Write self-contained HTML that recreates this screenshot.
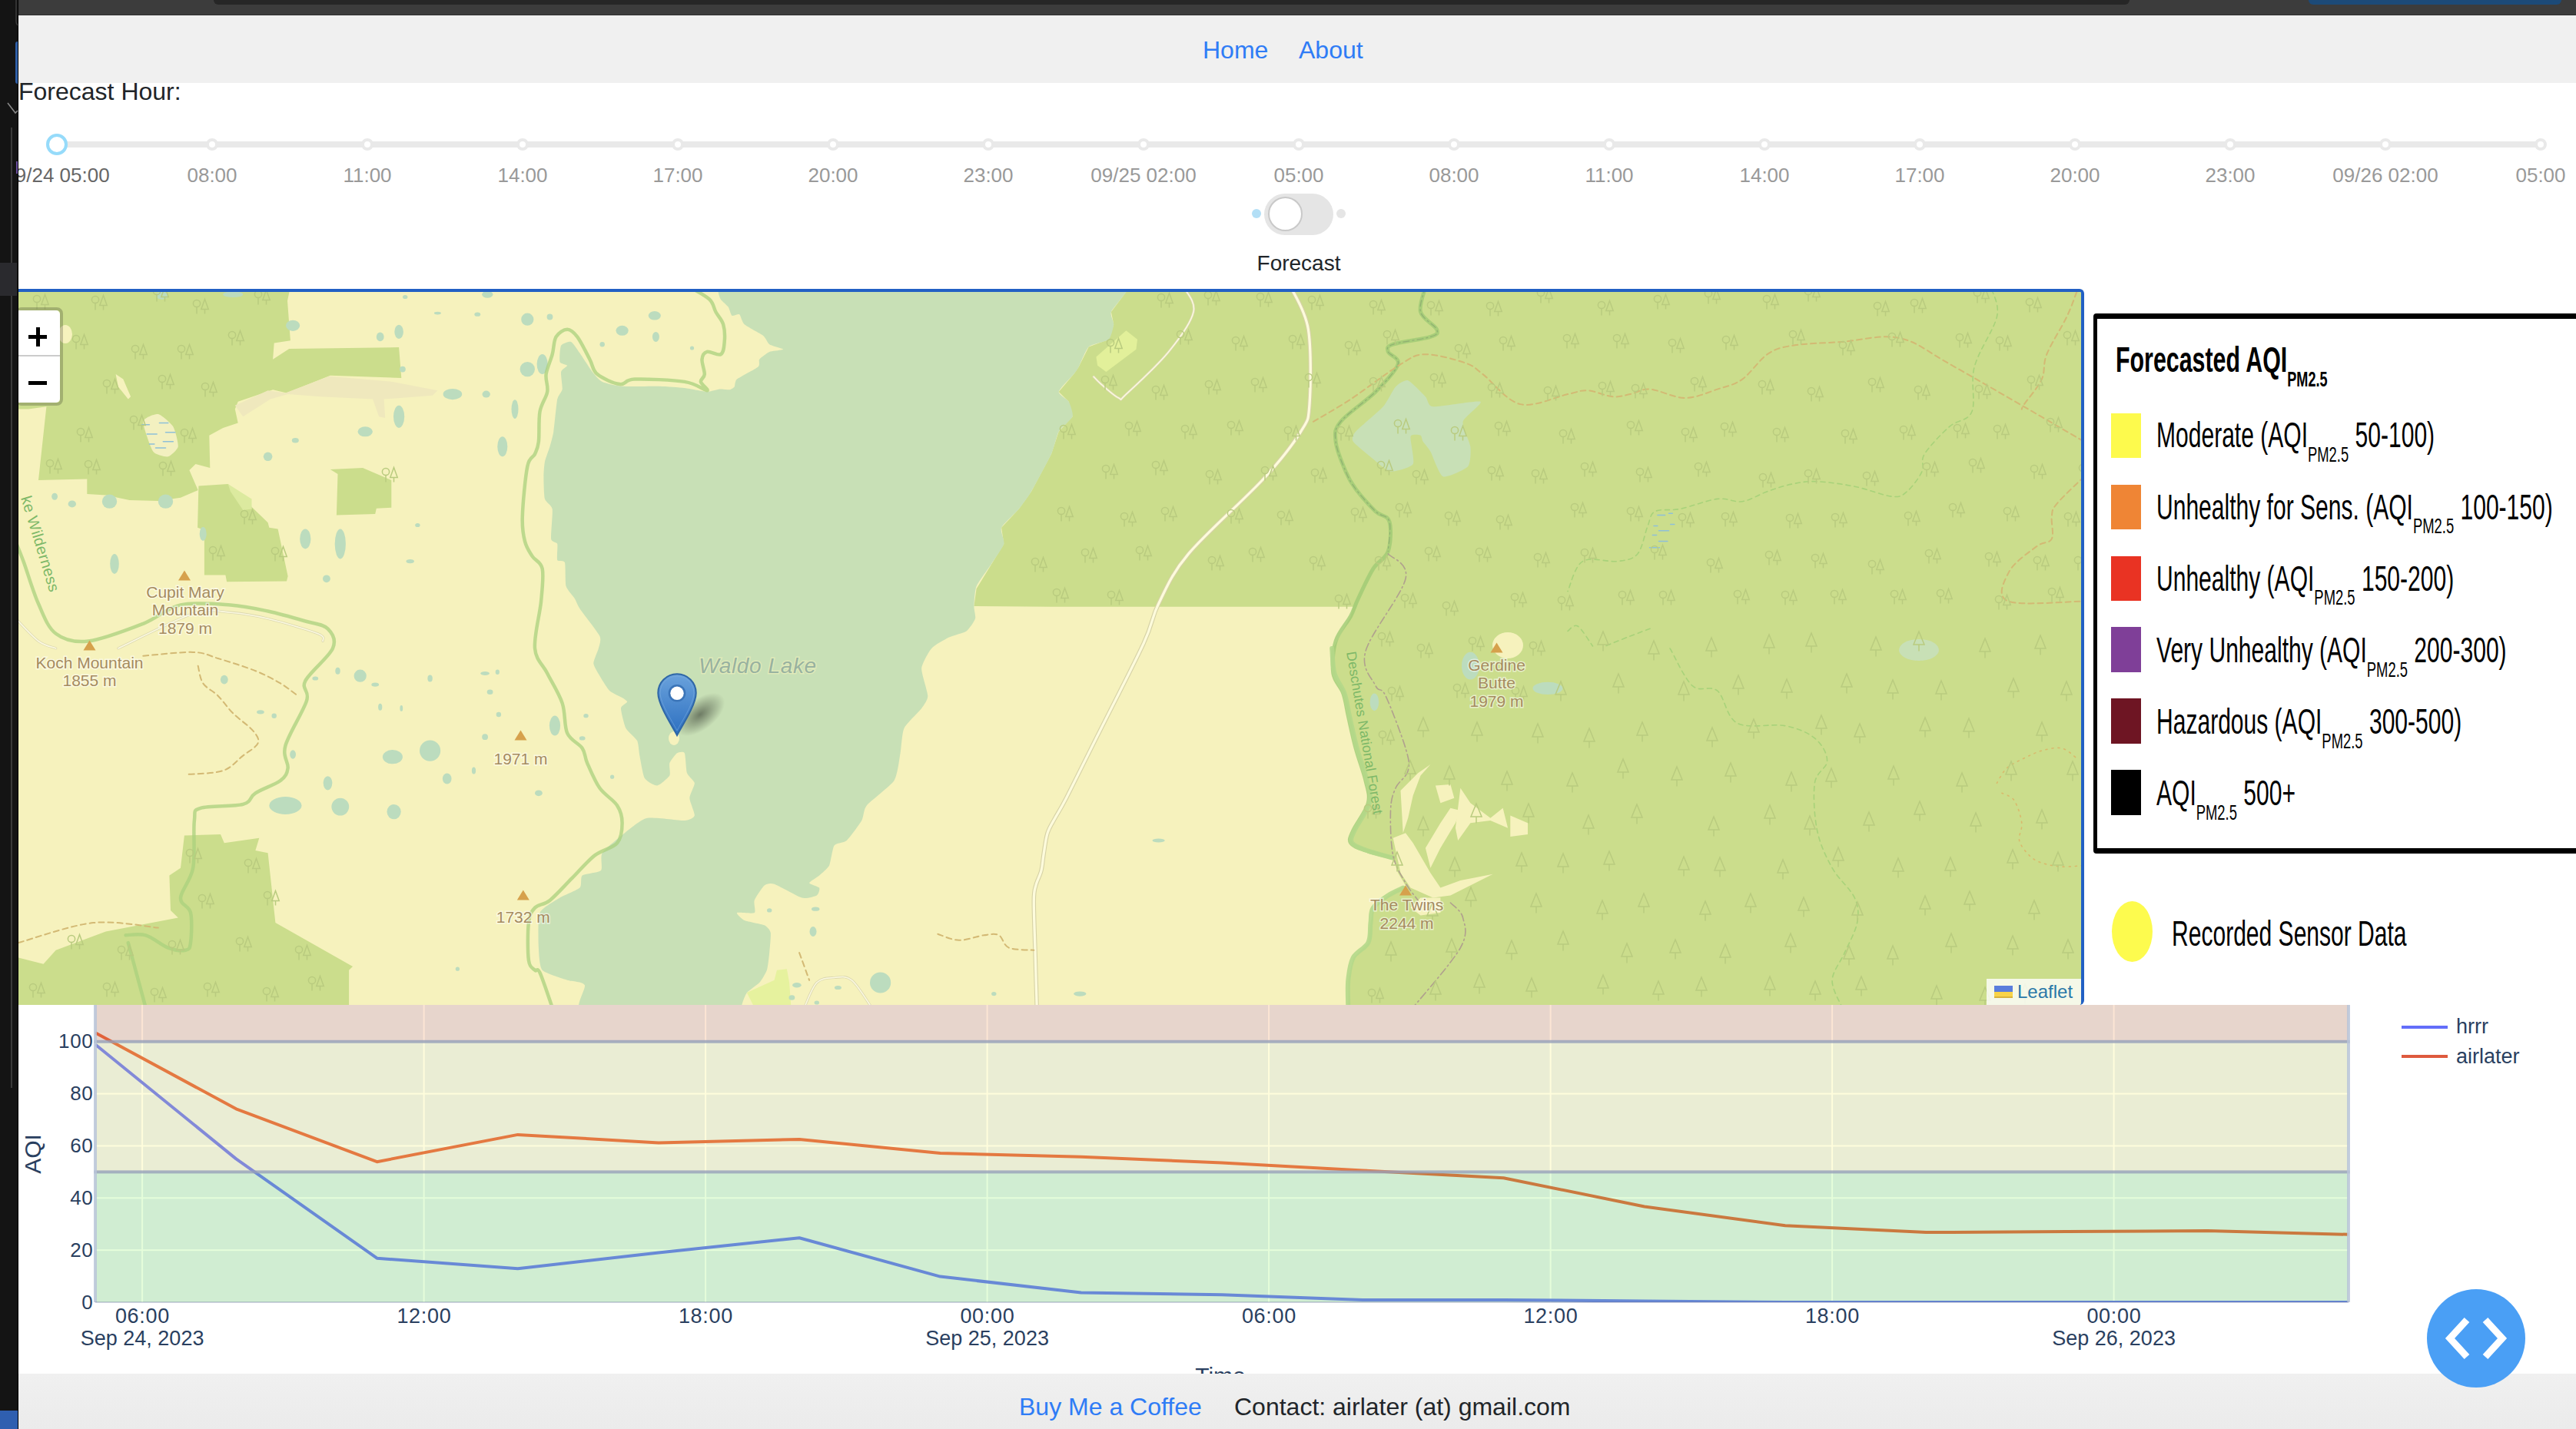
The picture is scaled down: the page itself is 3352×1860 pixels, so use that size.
<!DOCTYPE html>
<html><head><meta charset="utf-8">
<style>
*{margin:0;padding:0;box-sizing:border-box}
html,body{width:3352px;height:1860px;overflow:hidden;background:#fff;font-family:"Liberation Sans",sans-serif;color:#212529}
.a{position:absolute}
.t{position:absolute;white-space:nowrap;line-height:1}
</style></head><body>

<div class="a" style="left:24px;top:0;width:3328px;height:20px;background:#3c3c3c;border-bottom:1px solid #2e2e2e"></div>
<div class="a" style="left:278px;top:0;width:2493px;height:6px;background:#262626;border-radius:0 0 17px 17px"></div>
<div class="a" style="left:3004px;top:0;width:329px;height:6px;background:#1c4a78;border-radius:0 0 17px 17px"></div>
<div class="a" style="left:24px;top:20px;width:3328px;height:88px;background:#f0f0f0"></div>

<div class="t" style="left:1565px;top:48.9px;font-size:32px;color:#2f7cf6;">Home</div>
<div class="t" style="left:1690px;top:48.9px;font-size:32px;color:#2f7cf6;">About</div>
<div class="t" style="left:24px;top:102.9px;font-size:32px;color:#212529;">Forecast Hour:</div>
<div class="a" style="left:74px;top:184px;width:3232px;height:8px;background:#e9e9e9;border-radius:4px"></div>
<div class="t" style="left:74.0px;top:215.0px;font-size:26px;color:#666;transform:translateX(-50%);">09/24 05:00</div>
<div class="a" style="left:268.0px;top:180px;width:16px;height:16px;border-radius:50%;background:#fff;border:4px solid #e9e9e9"></div>
<div class="t" style="left:276.0px;top:215.0px;font-size:26px;color:#999;transform:translateX(-50%);">08:00</div>
<div class="a" style="left:470.0px;top:180px;width:16px;height:16px;border-radius:50%;background:#fff;border:4px solid #e9e9e9"></div>
<div class="t" style="left:478.0px;top:215.0px;font-size:26px;color:#999;transform:translateX(-50%);">11:00</div>
<div class="a" style="left:672.0px;top:180px;width:16px;height:16px;border-radius:50%;background:#fff;border:4px solid #e9e9e9"></div>
<div class="t" style="left:680.0px;top:215.0px;font-size:26px;color:#999;transform:translateX(-50%);">14:00</div>
<div class="a" style="left:874.0px;top:180px;width:16px;height:16px;border-radius:50%;background:#fff;border:4px solid #e9e9e9"></div>
<div class="t" style="left:882.0px;top:215.0px;font-size:26px;color:#999;transform:translateX(-50%);">17:00</div>
<div class="a" style="left:1076.0px;top:180px;width:16px;height:16px;border-radius:50%;background:#fff;border:4px solid #e9e9e9"></div>
<div class="t" style="left:1084.0px;top:215.0px;font-size:26px;color:#999;transform:translateX(-50%);">20:00</div>
<div class="a" style="left:1278.0px;top:180px;width:16px;height:16px;border-radius:50%;background:#fff;border:4px solid #e9e9e9"></div>
<div class="t" style="left:1286.0px;top:215.0px;font-size:26px;color:#999;transform:translateX(-50%);">23:00</div>
<div class="a" style="left:1480.0px;top:180px;width:16px;height:16px;border-radius:50%;background:#fff;border:4px solid #e9e9e9"></div>
<div class="t" style="left:1488.0px;top:215.0px;font-size:26px;color:#999;transform:translateX(-50%);">09/25 02:00</div>
<div class="a" style="left:1682.0px;top:180px;width:16px;height:16px;border-radius:50%;background:#fff;border:4px solid #e9e9e9"></div>
<div class="t" style="left:1690.0px;top:215.0px;font-size:26px;color:#999;transform:translateX(-50%);">05:00</div>
<div class="a" style="left:1884.0px;top:180px;width:16px;height:16px;border-radius:50%;background:#fff;border:4px solid #e9e9e9"></div>
<div class="t" style="left:1892.0px;top:215.0px;font-size:26px;color:#999;transform:translateX(-50%);">08:00</div>
<div class="a" style="left:2086.0px;top:180px;width:16px;height:16px;border-radius:50%;background:#fff;border:4px solid #e9e9e9"></div>
<div class="t" style="left:2094.0px;top:215.0px;font-size:26px;color:#999;transform:translateX(-50%);">11:00</div>
<div class="a" style="left:2288.0px;top:180px;width:16px;height:16px;border-radius:50%;background:#fff;border:4px solid #e9e9e9"></div>
<div class="t" style="left:2296.0px;top:215.0px;font-size:26px;color:#999;transform:translateX(-50%);">14:00</div>
<div class="a" style="left:2490.0px;top:180px;width:16px;height:16px;border-radius:50%;background:#fff;border:4px solid #e9e9e9"></div>
<div class="t" style="left:2498.0px;top:215.0px;font-size:26px;color:#999;transform:translateX(-50%);">17:00</div>
<div class="a" style="left:2692.0px;top:180px;width:16px;height:16px;border-radius:50%;background:#fff;border:4px solid #e9e9e9"></div>
<div class="t" style="left:2700.0px;top:215.0px;font-size:26px;color:#999;transform:translateX(-50%);">20:00</div>
<div class="a" style="left:2894.0px;top:180px;width:16px;height:16px;border-radius:50%;background:#fff;border:4px solid #e9e9e9"></div>
<div class="t" style="left:2902.0px;top:215.0px;font-size:26px;color:#999;transform:translateX(-50%);">23:00</div>
<div class="a" style="left:3096.0px;top:180px;width:16px;height:16px;border-radius:50%;background:#fff;border:4px solid #e9e9e9"></div>
<div class="t" style="left:3104.0px;top:215.0px;font-size:26px;color:#999;transform:translateX(-50%);">09/26 02:00</div>
<div class="a" style="left:3298.0px;top:180px;width:16px;height:16px;border-radius:50%;background:#fff;border:4px solid #e9e9e9"></div>
<div class="t" style="left:3306.0px;top:215.0px;font-size:26px;color:#999;transform:translateX(-50%);">05:00</div>
<div class="a" style="left:60px;top:174px;width:28px;height:28px;border-radius:50%;background:#fff;border:4px solid #96dbfa"></div>
<div class="a" style="left:1629px;top:272px;width:12px;height:12px;border-radius:50%;background:#b3dff6"></div>
<div class="a" style="left:1739px;top:272px;width:12px;height:12px;border-radius:50%;background:#e5e5e5"></div>
<div class="a" style="left:1645px;top:252px;width:90px;height:54px;border-radius:27px;background:#e5e5e5"></div>
<div class="a" style="left:1650px;top:256px;width:45px;height:45px;border-radius:50%;background:#fff;border:2px solid #c9c9c9"></div>

<div class="t" style="left:1690px;top:329.3px;font-size:28px;color:#212529;transform:translateX(-50%);">Forecast</div>
<div id="map" class="a" style="left:24px;top:376px;width:2688px;height:932px;border-top:4px solid #2260c4;border-right:4px solid #2260c4;border-top-right-radius:6px;border-bottom-right-radius:6px;overflow:hidden;background:#f6f2bf">
<svg width="2684" height="928" viewBox="24 380 2684 928" style="position:absolute;left:0;top:0">
<rect x="0" y="300" width="2800" height="1100" fill="#f6f2bd"/>
<polygon points="11.0,373.5 377.9,373.5 374.0,391.4 377.9,443.3 356.7,446.5 355.1,467.7 376.2,454.0 519.1,452.1 522.3,492.0 429.8,488.8 373.0,511.5 355.1,507.3 309.7,522.8 305.8,532.6 309.7,550.4 290.2,556.9 272.3,566.7 273.3,608.9 254.5,604.0 246.4,612.1 257.7,638.1 235.0,647.8 205.8,652.0 168.5,651.1 137.6,644.6 113.3,643.0 113.3,623.5 50.0,625.1 60.4,529.3 37.0,532.6 11.0,532.6" fill="#cbdd8c" />
<polygon points="305.8,527.7 348.6,508.2 371.4,511.5 428.2,489.7 510.9,496.9 569.4,508.2 562.9,514.7 499.6,519.6 501.2,543.9 493.1,542.3 485.0,519.6 416.8,516.3 374.6,513.1 351.9,519.6 316.2,542.3" fill="#efe8bd" />
<polygon points="258.4,632.6 296.7,630.0 348.6,680.3 350.3,686.8 361.6,688.4 374.6,750.1 373.0,756.6 295.1,757.2 293.4,748.5 265.9,748.5 265.9,690.0 257.1,686.8" fill="#cbdd8c" />
<polygon points="296.7,630.0 327.5,649.4 327.5,662.4 316.2,664.1 299.9,639.7" fill="#dcea9f" />
<polygon points="429.8,611.1 472.0,608.9 509.3,625.1 509.3,660.8 489.8,661.8 488.2,668.9 437.9,670.5 439.5,617.0" fill="#cbdd8c" />
<polygon points="11.0,1243.3 56.5,1254.7 72.7,1236.8 137.6,1212.5 231.8,1194.6 222.0,1184.9 220.4,1139.4 235.0,1129.7 239.9,1087.5 287.0,1085.9 291.8,1097.2 337.3,1090.7 332.4,1107.0 348.6,1110.2 358.4,1201.1 459.0,1257.9 454.1,1262.8 454.1,1324.5 11.0,1324.5" fill="#cbdd8c" />
<polygon points="1465.4,367.0 2754.2,367.0 2754.2,1324.5 1754.3,1324.5 1754.3,1275.8 1760.8,1246.5 1780.3,1227.1 1783.5,1201.1 1786.8,1181.6 1806.3,1165.4 1816.0,1158.9 1829.0,1152.4 1819.2,1136.2 1812.7,1116.7 1777.0,1107.0 1757.6,1097.2 1760.8,1081.0 1780.3,1045.3 1777.0,1016.1 1764.1,973.9 1754.3,931.7 1747.8,902.4 1734.8,876.5 1731.6,844.0 1734.8,843.9 1757.6,802.0 1760.8,789.7 1368.0,789.7 1267.4,789.0 1270.6,766.3 1306.3,707.9 1303.1,686.8 1325.8,662.4 1342.0,639.7 1368.0,591.0 1377.7,561.8 1395.6,542.3 1390.7,522.8 1377.7,509.9 1397.2,487.1 1403.7,477.4 1416.7,451.4 1442.7,441.7 1449.2,422.2 1445.9,406.0 1465.4,380.0" fill="#cbdd8c" />
<polygon points="1812.7,1090.7 1822.5,1136.2 1835.5,1155.6 1864.7,1168.6 1887.4,1165.4 1942.6,1137.8 1900.4,1145.9 1874.4,1155.6 1861.4,1136.2 1838.7,1097.2 1829.0,1084.2" fill="#f6f2bd" />
<polygon points="1822.5,1029.0 1845.2,1006.3 1861.4,995.0 1848.5,1009.6 1838.7,1035.5 1832.2,1064.8 1825.7,1084.2" fill="#f6f2bd" />
<polygon points="1854.9,1103.7 1874.4,1071.2 1887.4,1051.8 1900.4,1055.0 1893.9,1071.2 1874.4,1103.7 1861.4,1129.7" fill="#f6f2bd" />
<polygon points="1900.4,1025.8 1913.4,1045.3 1939.4,1064.8 1955.6,1051.8 1962.1,1077.7 1939.4,1068.0 1913.4,1071.2 1897.2,1094.0 1893.9,1077.7" fill="#f6f2bd" />
<polygon points="1965.3,1061.5 1988.0,1071.2 1988.0,1085.9 1965.3,1089.1" fill="#f6f2bd" />
<polygon points="1867.9,1022.5 1887.4,1020.9 1892.3,1038.8 1874.4,1045.3" fill="#f6f2bd" />
<polygon points="1848.5,1168.6 1874.4,1168.6 1874.4,1188.1 1848.5,1191.4 1835.5,1181.6" fill="#f6f2bd" />
<ellipse cx="1962" cy="840" rx="20" ry="17" fill="#f6f2bd"/>
<path d="M730.1,449.8 C731.5,447.2 740.6,444.0 743.1,444.9 C745.5,445.9 751.7,455.6 754.4,459.5 C757.2,463.4 767.7,480.1 770.7,483.9 C773.6,487.6 779.8,495.0 783.7,496.9 C787.5,498.8 802.2,502.1 809.6,502.7 C817.1,503.3 850.2,502.5 858.3,502.7 C866.4,502.9 884.6,504.3 890.8,505.0 C896.9,505.7 915.5,509.7 920.0,509.9 C924.5,510.0 933.3,506.9 936.2,506.6 C939.2,506.3 947.3,507.6 949.2,507.3 C951.2,506.9 954.7,504.7 955.7,503.4 C956.7,502.0 955.9,496.2 959.0,493.6 C962.0,491.0 983.6,480.0 986.5,477.4 C989.5,474.8 986.7,469.6 988.2,467.7 C989.6,465.7 998.1,459.2 1001.2,457.9 C1004.2,456.6 1019.0,455.6 1019.0,454.7 C1019.0,453.7 1003.8,450.0 1001.2,448.2 C998.6,446.4 996.3,439.4 993.0,436.8 C989.8,434.2 971.8,425.0 968.7,422.2 C965.6,419.4 963.8,410.4 962.2,409.2 C960.6,408.1 953.9,411.8 952.5,410.8 C951.0,409.9 949.1,401.6 947.6,399.5 C946.1,397.4 939.2,391.7 937.9,389.7 C936.6,387.8 934.9,382.3 934.6,380.0 C934.3,377.7 881.5,368.3 934.6,367.0 C987.7,365.7 1412.3,365.7 1465.4,367.0 C1518.5,368.3 1467.3,376.1 1465.4,380.0 C1463.4,383.9 1447.5,401.8 1445.9,406.0 C1444.3,410.2 1449.5,418.6 1449.2,422.2 C1448.8,425.8 1445.9,438.8 1442.7,441.7 C1439.4,444.6 1420.6,447.8 1416.7,451.4 C1412.8,455.0 1405.7,473.8 1403.7,477.4 C1401.8,481.0 1399.8,483.9 1397.2,487.1 C1394.6,490.4 1378.4,506.3 1377.7,509.9 C1377.1,513.4 1388.9,519.6 1390.7,522.8 C1392.5,526.1 1396.9,538.4 1395.6,542.3 C1394.3,546.2 1380.5,556.9 1377.7,561.8 C1375.0,566.7 1371.6,583.2 1368.0,591.0 C1364.4,598.8 1346.2,632.6 1342.0,639.7 C1337.8,646.8 1329.7,657.7 1325.8,662.4 C1321.9,667.1 1305.0,682.2 1303.1,686.8 C1301.1,691.3 1307.6,703.2 1306.3,707.9 C1305.0,712.6 1293.6,728.3 1290.1,733.9 C1286.5,739.4 1272.9,757.5 1270.6,763.1 C1268.3,768.6 1267.5,784.8 1267.4,789.0 C1267.2,793.3 1270.0,802.0 1269.0,805.3 C1268.0,808.5 1261.0,819.1 1257.6,821.5 C1254.2,823.9 1239.4,827.4 1234.9,829.6 C1230.3,831.9 1215.7,839.9 1212.2,843.9 C1208.6,847.9 1199.7,863.8 1199.2,870.0 C1198.7,876.1 1207.3,900.5 1207.3,905.7 C1207.3,910.9 1202.3,917.7 1199.2,921.9 C1196.1,926.1 1179.2,942.0 1176.5,947.9 C1173.7,953.7 1172.9,973.5 1171.6,980.3 C1170.3,987.2 1167.9,1009.2 1163.5,1016.1 C1159.1,1022.9 1132.0,1043.3 1127.8,1048.5 C1123.5,1053.7 1123.9,1063.5 1121.3,1068.0 C1118.7,1072.5 1105.4,1090.7 1101.8,1094.0 C1098.2,1097.2 1087.8,1097.2 1085.6,1100.5 C1083.3,1103.7 1081.0,1122.5 1079.1,1126.4 C1077.1,1130.3 1068.7,1137.1 1066.1,1139.4 C1063.5,1141.7 1053.1,1147.5 1053.1,1149.2 C1053.1,1150.8 1065.1,1154.0 1066.1,1155.6 C1067.1,1157.3 1065.1,1164.1 1062.8,1165.4 C1060.6,1166.7 1048.9,1170.1 1043.4,1168.6 C1037.8,1167.2 1012.5,1152.4 1007.6,1150.8 C1002.8,1149.2 997.3,1150.3 994.7,1152.4 C992.1,1154.5 983.0,1168.3 981.7,1171.9 C980.4,1175.5 983.9,1186.5 981.7,1188.1 C979.4,1189.7 960.3,1187.1 959.0,1188.1 C957.7,1189.1 965.1,1196.2 968.7,1197.9 C972.3,1199.5 991.3,1202.7 994.7,1204.3 C998.1,1206.0 1002.1,1210.5 1002.8,1214.1 C1003.4,1217.7 1001.6,1235.2 1001.2,1240.1 C1000.7,1244.9 999.2,1258.9 997.9,1262.8 C996.6,1266.7 990.8,1276.1 988.2,1279.0 C985.6,1281.9 974.2,1289.1 971.9,1292.0 C969.7,1294.9 966.1,1304.7 965.4,1307.9 C964.8,1311.1 985.9,1322.8 965.4,1324.5 C945.0,1326.1 781.4,1328.7 760.9,1324.5 C740.5,1320.2 763.2,1287.1 760.9,1282.3 C758.7,1277.4 743.7,1277.7 738.2,1275.8 C732.7,1273.8 709.5,1267.0 705.7,1262.8 C702.0,1258.6 701.2,1241.0 700.9,1233.6 C700.5,1226.1 699.7,1194.6 702.5,1188.1 C705.3,1181.6 723.3,1171.9 728.5,1168.6 C733.7,1165.4 751.5,1158.6 754.4,1155.6 C757.4,1152.7 754.9,1141.7 757.7,1139.4 C760.4,1137.1 779.4,1135.8 782.0,1132.9 C784.6,1130.0 780.6,1115.1 783.7,1110.2 C786.7,1105.3 807.0,1088.8 812.9,1084.2 C818.7,1079.7 834.3,1066.4 842.1,1064.8 C849.9,1063.1 884.6,1068.3 890.8,1068.0 C896.9,1067.7 903.1,1064.4 903.8,1061.5 C904.4,1058.6 897.3,1043.0 897.3,1038.8 C897.3,1034.6 904.1,1022.5 903.8,1019.3 C903.4,1016.1 895.3,1010.2 894.0,1006.3 C892.7,1002.4 892.1,982.9 890.8,980.3 C889.5,977.7 883.0,979.0 881.0,980.3 C879.1,981.6 872.3,990.4 871.3,993.3 C870.3,996.3 872.9,1006.6 871.3,1009.6 C869.7,1012.5 858.3,1022.2 855.1,1022.5 C851.8,1022.9 841.1,1016.7 838.8,1012.8 C836.6,1008.9 833.3,988.5 832.3,983.6 C831.4,978.7 830.9,967.7 829.1,964.1 C827.3,960.5 816.6,952.1 814.5,947.9 C812.4,943.7 807.8,925.3 808.0,921.9 C808.2,918.5 815.8,915.1 816.1,913.8 C816.4,912.5 813.5,910.4 811.2,908.9 C809.0,907.5 796.5,902.1 793.4,899.2 C790.3,896.3 782.5,883.3 780.4,879.7 C778.3,876.1 772.5,867.0 772.3,863.5 C772.1,859.9 778.0,847.5 778.8,844.0 C779.6,840.5 782.8,833.2 780.4,828.0 C778.0,822.8 757.7,797.2 754.4,792.3 C751.2,787.4 749.7,782.2 747.9,779.3 C746.2,776.4 737.9,767.8 736.6,763.1 C735.3,758.4 736.1,735.6 735.0,732.2 C733.8,728.8 726.2,731.4 725.2,729.0 C724.2,726.5 726.0,710.6 725.2,707.9 C724.4,705.1 717.8,705.9 717.1,701.4 C716.5,696.8 719.5,667.6 718.7,662.4 C717.9,657.2 710.1,653.7 709.0,649.4 C707.8,645.2 707.4,625.1 707.4,620.2 C707.4,615.4 708.2,604.6 709.0,600.8 C709.8,596.9 714.3,585.2 715.5,581.3 C716.6,577.4 719.4,568.0 720.3,561.8 C721.3,555.6 724.1,525.1 725.2,519.6 C726.4,514.1 731.2,510.2 731.7,506.6 C732.2,503.0 729.4,487.0 730.1,483.9 C730.7,480.8 738.4,477.1 738.2,475.8 C738.0,474.5 729.3,473.5 728.5,470.9 C727.7,468.3 728.6,452.4 730.1,449.8 Z" fill="#c8e0b6" />
<ellipse cx="877" cy="961" rx="7" ry="9" fill="#f6f2bd"/>
<path d="M1832.2,495.2 C1836.1,496.5 1851.7,512.9 1854.9,516.3 C1858.2,519.8 1857.5,528.7 1864.7,529.3 C1871.8,530.0 1922.5,520.9 1926.4,522.8 C1930.3,524.8 1904.9,543.0 1903.6,548.8 C1902.3,554.7 1912.7,575.4 1913.4,581.3 C1914.0,587.1 1913.7,603.3 1910.1,607.2 C1906.6,611.1 1882.5,622.2 1877.7,620.2 C1872.8,618.3 1864.0,592.3 1861.4,587.8 C1858.8,583.2 1853.0,576.9 1851.7,574.8 C1850.4,572.7 1850.1,567.3 1848.5,566.7 C1846.8,566.0 1836.4,564.6 1835.5,568.3 C1834.5,572.0 1841.3,599.5 1838.7,604.0 C1836.1,608.5 1814.7,614.4 1809.5,613.7 C1804.3,613.1 1791.6,601.4 1786.8,597.5 C1781.9,593.6 1763.1,578.4 1760.8,574.8 C1758.5,571.2 1760.2,566.3 1764.1,561.8 C1767.9,557.2 1794.6,535.2 1799.8,529.3 C1805.0,523.5 1812.7,506.8 1816.0,503.4 C1819.2,500.0 1828.3,493.9 1832.2,495.2 Z" fill="#c8e0b6" />
<polygon points="1426.4,464.4 1465.4,430.3 1480.0,441.7 1478.4,454.7 1439.4,483.9 1428.1,475.8" fill="#e2f09a" />
<polygon points="971.9,1292.0 1007.6,1275.8 1010.9,1262.8 1023.9,1261.2 1027.1,1279.0 1030.4,1324.5 988.2,1324.5" fill="#e6f29e" />
<ellipse cx="2497" cy="846" rx="26" ry="14" fill="#c8e0b6"/>
<path d="M186.3,548.8 C187.0,543.9 201.9,538.4 205.8,539.1 C209.7,539.7 222.7,551.1 225.3,555.3 C227.9,559.5 232.4,577.4 231.8,581.3 C231.1,585.2 222.0,593.6 218.8,594.3 C215.5,594.9 202.5,592.3 199.3,587.8 C196.1,583.2 185.7,553.7 186.3,548.8 Z" fill="#f3f0c0" />
<polyline points="184.7,552.7 194.4,552.7" fill="none" stroke="#8fc0d8" stroke-width="1.5" stroke-linejoin="round" stroke-linecap="round" />
<polyline points="207.4,550.4 218.8,550.4" fill="none" stroke="#8fc0d8" stroke-width="1.5" stroke-linejoin="round" stroke-linecap="round" />
<polyline points="191.2,565.0 204.2,565.0" fill="none" stroke="#8fc0d8" stroke-width="1.5" stroke-linejoin="round" stroke-linecap="round" />
<polyline points="215.5,562.8 227.9,562.8" fill="none" stroke="#8fc0d8" stroke-width="1.5" stroke-linejoin="round" stroke-linecap="round" />
<polyline points="194.4,578.0 200.9,578.0" fill="none" stroke="#8fc0d8" stroke-width="1.5" stroke-linejoin="round" stroke-linecap="round" />
<polyline points="212.3,574.8 225.3,574.8" fill="none" stroke="#8fc0d8" stroke-width="1.5" stroke-linejoin="round" stroke-linecap="round" />
<polyline points="202.5,582.9 215.5,582.9" fill="none" stroke="#8fc0d8" stroke-width="1.5" stroke-linejoin="round" stroke-linecap="round" />
<polygon points="150.6,487.1 160.3,493.6 170.1,516.3 166.8,519.6 153.9,503.4" fill="#f6f2bd" />
<ellipse cx="85" cy="435" rx="9" ry="12" fill="#f6f2bd"/>
<ellipse cx="381.1" cy="423.8" rx="9.1" ry="7.1" fill="#bcdcbe"/>
<ellipse cx="494.7" cy="438.4" rx="4.9" ry="5.8" fill="#bcdcbe"/>
<ellipse cx="519.1" cy="431.9" rx="5.8" ry="9.1" fill="#bcdcbe"/>
<ellipse cx="523.9" cy="480.6" rx="3.9" ry="3.9" fill="#bcdcbe"/>
<ellipse cx="519.1" cy="542.3" rx="7.1" ry="14.6" fill="#bcdcbe"/>
<ellipse cx="588.9" cy="513.1" rx="12.3" ry="7.1" fill="#bcdcbe"/>
<ellipse cx="632.7" cy="513.1" rx="5.2" ry="4.5" fill="#bcdcbe"/>
<ellipse cx="670.0" cy="532.6" rx="4.5" ry="12.3" fill="#bcdcbe"/>
<ellipse cx="653.8" cy="581.3" rx="6.5" ry="13.0" fill="#bcdcbe"/>
<ellipse cx="686.3" cy="415.7" rx="8.1" ry="8.1" fill="#bcdcbe"/>
<ellipse cx="686.3" cy="480.6" rx="9.7" ry="9.7" fill="#bcdcbe"/>
<ellipse cx="384.3" cy="573.2" rx="4.5" ry="3.2" fill="#bcdcbe"/>
<ellipse cx="348.6" cy="594.3" rx="5.8" ry="5.8" fill="#bcdcbe"/>
<ellipse cx="475.2" cy="561.8" rx="9.7" ry="6.5" fill="#bcdcbe"/>
<ellipse cx="397.3" cy="701.4" rx="7.1" ry="13.0" fill="#bcdcbe"/>
<ellipse cx="442.8" cy="707.9" rx="7.1" ry="19.5" fill="#bcdcbe"/>
<ellipse cx="424.9" cy="753.3" rx="4.9" ry="4.9" fill="#bcdcbe"/>
<ellipse cx="215.5" cy="652.7" rx="9.7" ry="9.1" fill="#bcdcbe"/>
<ellipse cx="142.5" cy="652.7" rx="9.7" ry="9.1" fill="#bcdcbe"/>
<ellipse cx="93.8" cy="655.9" rx="5.2" ry="4.5" fill="#bcdcbe"/>
<ellipse cx="71.1" cy="646.2" rx="3.9" ry="4.5" fill="#bcdcbe"/>
<ellipse cx="149.0" cy="733.9" rx="5.8" ry="13.0" fill="#bcdcbe"/>
<ellipse cx="264.2" cy="694.9" rx="4.5" ry="9.1" fill="#bcdcbe"/>
<ellipse cx="533.7" cy="730.6" rx="5.2" ry="2.6" fill="#bcdcbe"/>
<ellipse cx="543.4" cy="683.5" rx="3.2" ry="2.6" fill="#bcdcbe"/>
<ellipse cx="621.3" cy="409.2" rx="3.9" ry="2.6" fill="#bcdcbe"/>
<ellipse cx="569.4" cy="407.6" rx="4.5" ry="1.9" fill="#bcdcbe"/>
<ellipse cx="527.2" cy="386.5" rx="3.2" ry="2.6" fill="#bcdcbe"/>
<ellipse cx="634.3" cy="383.2" rx="7.1" ry="4.5" fill="#bcdcbe"/>
<ellipse cx="210.7" cy="384.9" rx="8.1" ry="4.9" fill="#bcdcbe"/>
<ellipse cx="303.2" cy="383.2" rx="13.0" ry="3.9" fill="#bcdcbe"/>
<ellipse cx="715.5" cy="412.5" rx="3.9" ry="3.9" fill="#bcdcbe"/>
<ellipse cx="851.8" cy="410.8" rx="8.1" ry="5.8" fill="#bcdcbe"/>
<ellipse cx="809.6" cy="430.3" rx="8.1" ry="6.5" fill="#bcdcbe"/>
<ellipse cx="853.4" cy="438.4" rx="4.5" ry="6.5" fill="#bcdcbe"/>
<ellipse cx="783.7" cy="448.2" rx="3.2" ry="3.2" fill="#bcdcbe"/>
<ellipse cx="900.5" cy="453.0" rx="2.6" ry="2.6" fill="#bcdcbe"/>
<ellipse cx="705.7" cy="474.1" rx="7.1" ry="13.0" fill="#bcdcbe"/>
<ellipse cx="371.4" cy="1048.5" rx="21.1" ry="11.4" fill="#bcdcbe"/>
<ellipse cx="442.8" cy="1050.1" rx="11.4" ry="11.4" fill="#bcdcbe"/>
<ellipse cx="512.6" cy="1056.6" rx="9.1" ry="9.7" fill="#bcdcbe"/>
<ellipse cx="510.9" cy="985.2" rx="13.0" ry="9.1" fill="#bcdcbe"/>
<ellipse cx="559.6" cy="977.1" rx="13.6" ry="13.6" fill="#bcdcbe"/>
<ellipse cx="426.5" cy="1019.3" rx="5.8" ry="9.1" fill="#bcdcbe"/>
<ellipse cx="581.7" cy="1013.5" rx="5.8" ry="7.1" fill="#bcdcbe"/>
<ellipse cx="468.7" cy="879.7" rx="8.1" ry="8.1" fill="#bcdcbe"/>
<ellipse cx="291.8" cy="884.6" rx="4.9" ry="5.8" fill="#bcdcbe"/>
<ellipse cx="338.9" cy="926.8" rx="4.9" ry="2.6" fill="#bcdcbe"/>
<ellipse cx="356.7" cy="931.7" rx="3.2" ry="3.2" fill="#bcdcbe"/>
<ellipse cx="631.1" cy="959.2" rx="3.9" ry="3.9" fill="#bcdcbe"/>
<ellipse cx="648.9" cy="930.0" rx="3.2" ry="3.2" fill="#bcdcbe"/>
<ellipse cx="494.7" cy="920.3" rx="2.6" ry="4.5" fill="#bcdcbe"/>
<ellipse cx="522.3" cy="921.9" rx="1.9" ry="3.9" fill="#bcdcbe"/>
<ellipse cx="381.1" cy="982.0" rx="3.9" ry="5.8" fill="#bcdcbe"/>
<ellipse cx="488.2" cy="891.1" rx="4.9" ry="2.6" fill="#bcdcbe"/>
<ellipse cx="637.6" cy="900.8" rx="3.9" ry="3.2" fill="#bcdcbe"/>
<ellipse cx="439.5" cy="873.2" rx="3.2" ry="4.5" fill="#bcdcbe"/>
<ellipse cx="410.3" cy="883.0" rx="3.9" ry="2.6" fill="#bcdcbe"/>
<ellipse cx="559.6" cy="883.0" rx="3.2" ry="4.5" fill="#bcdcbe"/>
<ellipse cx="631.1" cy="876.5" rx="5.8" ry="2.6" fill="#bcdcbe"/>
<ellipse cx="647.3" cy="874.8" rx="2.6" ry="3.2" fill="#bcdcbe"/>
<ellipse cx="595.4" cy="1261.2" rx="2.6" ry="2.6" fill="#bcdcbe"/>
<ellipse cx="616.5" cy="1003.1" rx="2.6" ry="4.5" fill="#bcdcbe"/>
<ellipse cx="1145.6" cy="1279.0" rx="13.6" ry="13.6" fill="#bcdcbe"/>
<ellipse cx="1058.0" cy="1212.5" rx="4.5" ry="6.5" fill="#bcdcbe"/>
<ellipse cx="1061.2" cy="1183.2" rx="5.2" ry="2.6" fill="#bcdcbe"/>
<ellipse cx="1001.2" cy="1184.9" rx="3.2" ry="2.6" fill="#bcdcbe"/>
<ellipse cx="1293.3" cy="1293.6" rx="3.2" ry="2.6" fill="#bcdcbe"/>
<ellipse cx="762.5" cy="931.7" rx="3.2" ry="2.6" fill="#bcdcbe"/>
<ellipse cx="757.7" cy="960.9" rx="3.9" ry="2.6" fill="#bcdcbe"/>
<ellipse cx="722.0" cy="944.6" rx="7.1" ry="13.0" fill="#bcdcbe"/>
<ellipse cx="700.9" cy="1032.3" rx="4.9" ry="3.9" fill="#bcdcbe"/>
<ellipse cx="796.6" cy="1011.2" rx="2.6" ry="2.6" fill="#bcdcbe"/>
<ellipse cx="1036.9" cy="1282.3" rx="5.8" ry="3.2" fill="#bcdcbe"/>
<ellipse cx="1030.4" cy="1298.5" rx="3.9" ry="3.2" fill="#bcdcbe"/>
<ellipse cx="1062.8" cy="1305.0" rx="3.2" ry="2.6" fill="#bcdcbe"/>
<ellipse cx="1090.4" cy="1285.5" rx="4.5" ry="2.6" fill="#bcdcbe"/>
<ellipse cx="1507.6" cy="1094.0" rx="8.1" ry="2.6" fill="#bcdcbe"/>
<ellipse cx="1405.3" cy="1293.6" rx="8.1" ry="3.2" fill="#bcdcbe"/>
<ellipse cx="1788.4" cy="913.8" rx="5.8" ry="11.4" fill="#bcdcbe"/>
<ellipse cx="1913.4" cy="866.7" rx="11.4" ry="17.9" fill="#bcdcbe"/>
<ellipse cx="2014.0" cy="895.9" rx="19.5" ry="8.1" fill="#bcdcbe"/>
<path d="M897.3,373.5 C901.6,376.2 917.6,384.3 923.2,389.7 C928.9,395.1 928.4,400.6 931.4,406.0 C934.3,411.4 939.2,415.7 941.1,422.2 C943.0,428.7 943.3,438.4 942.7,444.9 C942.2,451.4 941.6,459.0 937.9,461.2 C934.1,463.3 924.1,456.8 920.0,457.9 C915.9,459.0 914.0,462.8 913.5,467.7 C913.0,472.5 917.0,482.3 916.8,487.1 C916.5,492.0 911.3,493.4 911.9,496.9 C912.4,500.4 923.5,508.2 920.0,508.2 C916.5,508.2 906.5,499.3 890.8,496.9 C875.1,494.4 839.9,493.1 825.9,493.6 C811.8,494.2 814.5,501.2 806.4,500.1 C798.3,499.0 783.7,492.5 777.2,487.1 C770.7,481.7 771.7,475.8 767.4,467.7 C763.1,459.5 756.1,444.9 751.2,438.4 C746.3,431.9 742.8,428.7 738.2,428.7 C733.6,428.7 726.8,433.0 723.6,438.4 C720.3,443.8 720.9,453.0 718.7,461.2 C716.6,469.3 711.7,479.0 710.6,487.1 C709.5,495.2 713.6,501.7 712.2,509.9 C710.9,518.0 704.4,525.0 702.5,535.8 C700.6,546.6 702.0,565.6 700.9,574.8 C699.8,584.0 698.4,585.6 696.0,591.0 C693.6,596.4 689.0,593.7 686.3,607.2 C683.5,620.8 680.3,655.9 679.8,672.2 C679.2,688.4 680.8,696.0 683.0,704.6 C685.2,713.3 689.0,718.2 692.7,724.1 C696.5,730.1 703.8,730.6 705.7,740.3 C707.6,750.1 705.7,765.3 704.1,782.5 C702.5,799.8 694.6,828.2 696.0,843.9 C697.4,859.6 706.3,864.5 712.2,876.5 C718.2,888.4 727.4,902.4 731.7,915.4 C736.0,928.4 733.9,944.6 738.2,954.4 C742.5,964.1 753.4,967.4 757.7,973.9 C762.0,980.3 760.4,984.7 764.2,993.3 C768.0,1002.0 773.9,1016.6 780.4,1025.8 C786.9,1035.0 798.3,1040.9 803.1,1048.5 C808.0,1056.1 809.6,1063.1 809.6,1071.2 C809.6,1079.4 809.1,1090.2 803.1,1097.2 C797.2,1104.2 783.7,1105.9 773.9,1113.4 C764.2,1121.0 754.4,1132.9 744.7,1142.7 C735.0,1152.4 723.6,1165.4 715.5,1171.9 C707.4,1178.4 700.6,1176.7 696.0,1181.6 C691.4,1186.5 689.2,1189.7 687.9,1201.1 C686.5,1212.5 686.5,1239.5 687.9,1249.8 C689.2,1260.1 693.6,1260.1 696.0,1262.8 C698.4,1265.5 698.7,1257.9 702.5,1266.0 C706.3,1274.1 716.0,1303.9 718.7,1311.5 " fill="none" stroke="#a9d07e" stroke-width="4.5" stroke-linejoin="round" stroke-linecap="round" stroke-opacity="0.75"/>
<path d="M17.5,698.1 C19.7,703.6 25.1,716.0 30.5,730.6 C35.9,745.2 42.9,770.1 50.0,785.8 C57.0,801.5 61.9,816.6 72.7,824.7 C83.5,832.9 96.0,836.7 114.9,834.5 C133.8,832.3 166.3,819.6 186.3,811.8 C206.3,803.9 216.1,791.5 235.0,787.4 C253.9,783.4 281.0,786.1 299.9,787.4 C318.9,788.8 332.4,792.0 348.6,795.5 C364.9,799.0 384.3,804.7 397.3,808.5 C410.3,812.3 420.6,812.4 426.5,818.3 C432.5,824.2 437.9,832.6 433.0,843.9 C428.2,855.2 403.0,874.8 397.3,886.2 C391.6,897.6 403.3,898.1 399.0,912.2 C394.6,926.2 375.4,956.0 371.4,970.6 C367.3,985.2 375.7,992.2 374.6,999.8 C373.5,1007.4 371.9,1010.6 364.9,1016.1 C357.8,1021.5 340.5,1027.1 332.4,1032.3 C324.3,1037.4 328.1,1043.6 316.2,1046.9 C304.3,1050.1 271.5,1048.2 261.0,1051.8 C250.4,1055.3 254.5,1055.0 252.9,1068.0 C251.2,1081.0 254.2,1112.9 251.2,1129.7 C248.3,1146.4 235.6,1158.9 235.0,1168.6 C234.5,1178.4 245.8,1178.4 248.0,1188.1 C250.2,1197.9 249.1,1219.0 248.0,1227.1 C246.9,1235.2 246.4,1235.7 241.5,1236.8 C236.6,1237.9 227.4,1236.8 218.8,1233.6 C210.1,1230.3 198.8,1220.0 189.6,1217.3 C180.4,1214.6 167.9,1217.3 163.6,1217.3 " fill="none" stroke="#a9d07e" stroke-width="4.5" stroke-linejoin="round" stroke-linecap="round" stroke-opacity="0.75"/>
<path d="M166.8,1227.1 C170.6,1241.1 185.8,1297.4 189.6,1311.5 " fill="none" stroke="#a9d07e" stroke-width="4.5" stroke-linejoin="round" stroke-linecap="round" stroke-opacity="0.75"/>
<path d="M1854.9,373.5 C1853.9,378.9 1846.0,396.8 1848.5,406.0 C1850.9,415.2 1867.4,423.3 1869.6,428.7 C1871.7,434.1 1870.9,435.2 1861.4,438.4 C1852.0,441.7 1821.9,444.9 1812.7,448.2 C1803.5,451.4 1805.2,453.6 1806.3,457.9 C1807.3,462.2 1821.9,465.5 1819.2,474.1 C1816.5,482.8 1802.5,497.4 1790.0,509.9 C1777.6,522.3 1753.2,538.0 1744.6,548.8 C1735.9,559.6 1737.0,564.0 1738.1,574.8 C1739.2,585.6 1746.7,603.5 1751.1,613.7 C1755.4,624.0 1757.6,627.8 1764.1,636.5 C1770.5,645.1 1782.7,658.6 1790.0,665.7 C1797.3,672.7 1805.2,670.0 1807.9,678.7 C1810.6,687.3 1809.8,707.3 1806.3,717.6 C1802.7,727.9 1793.3,730.1 1786.8,740.3 C1780.3,750.6 1772.2,769.0 1767.3,779.3 C1762.4,789.6 1762.4,792.8 1757.6,802.0 C1752.7,811.2 1741.9,822.1 1738.1,834.5 C1734.3,846.9 1733.2,865.1 1734.8,876.5 C1736.5,887.8 1744.6,893.2 1747.8,902.4 C1751.1,911.6 1751.6,919.7 1754.3,931.7 C1757.0,943.6 1760.3,959.8 1764.1,973.9 C1767.8,987.9 1774.3,1004.2 1777.0,1016.1 C1779.7,1028.0 1783.0,1034.5 1780.3,1045.3 C1777.6,1056.1 1764.6,1072.3 1760.8,1081.0 C1757.0,1089.6 1754.9,1092.9 1757.6,1097.2 C1760.3,1101.5 1767.8,1103.7 1777.0,1107.0 C1786.2,1110.2 1806.8,1115.1 1812.7,1116.7 " fill="none" stroke="#9fcb74" stroke-width="5" stroke-linejoin="round" stroke-linecap="round" stroke-opacity="0.8"/>
<path d="M1854.9,373.5 C1853.9,378.9 1846.0,396.8 1848.5,406.0 C1850.9,415.2 1867.4,423.3 1869.6,428.7 C1871.7,434.1 1870.9,435.2 1861.4,438.4 C1852.0,441.7 1821.9,444.9 1812.7,448.2 C1803.5,451.4 1805.2,453.6 1806.3,457.9 C1807.3,462.2 1821.9,465.5 1819.2,474.1 C1816.5,482.8 1802.5,497.4 1790.0,509.9 C1777.6,522.3 1753.2,538.0 1744.6,548.8 C1735.9,559.6 1737.0,564.0 1738.1,574.8 C1739.2,585.6 1746.7,603.5 1751.1,613.7 C1755.4,624.0 1757.6,627.8 1764.1,636.5 C1770.5,645.1 1782.7,658.6 1790.0,665.7 C1797.3,672.7 1805.2,670.0 1807.9,678.7 C1810.6,687.3 1806.5,711.1 1806.3,717.6 " fill="none" stroke="#8aa870" stroke-width="1.2" stroke-linejoin="round" stroke-linecap="round" stroke-dasharray="8 4 2 4" stroke-opacity="0.8"/>
<path d="M1733.2,844.0 C1733.8,849.4 1733.8,866.7 1736.5,876.5 C1739.2,886.2 1746.2,893.2 1749.4,902.4 C1752.7,911.6 1753.2,919.7 1755.9,931.7 C1758.6,943.6 1761.9,959.8 1765.7,973.9 C1769.5,987.9 1776.0,1004.2 1778.7,1016.1 C1781.4,1028.0 1784.6,1034.5 1781.9,1045.3 C1779.2,1056.1 1766.2,1072.3 1762.4,1081.0 C1758.6,1089.6 1756.5,1092.9 1759.2,1097.2 C1761.9,1101.5 1769.7,1103.7 1778.7,1107.0 C1787.6,1110.2 1807.1,1115.1 1812.7,1116.7 " fill="none" stroke="#b4d88a" stroke-width="6" stroke-linejoin="round" stroke-linecap="round" stroke-opacity="0.9"/>
<path d="M1825.7,1155.6 C1822.5,1157.3 1812.7,1161.1 1806.3,1165.4 C1799.8,1169.7 1790.6,1175.7 1786.8,1181.6 C1783.0,1187.6 1784.6,1193.5 1783.5,1201.1 C1782.4,1208.7 1784.1,1219.5 1780.3,1227.1 C1776.5,1234.6 1765.1,1238.4 1760.8,1246.5 C1756.5,1254.7 1755.4,1264.9 1754.3,1275.8 C1753.2,1286.6 1754.3,1305.5 1754.3,1311.5 " fill="none" stroke="#b4d88a" stroke-width="6" stroke-linejoin="round" stroke-linecap="round" stroke-opacity="0.9"/>
<path d="M1679.6,373.5 C1683.4,382.7 1698.3,403.3 1702.4,428.7 C1706.4,454.1 1705.6,503.9 1704.0,526.1 C1702.4,548.3 1702.6,545.6 1692.6,561.8 C1682.6,578.0 1668.3,597.0 1643.9,623.5 C1619.6,650.0 1569.3,693.8 1546.5,720.9 C1523.8,747.9 1517.3,766.4 1507.6,785.8 C1497.9,805.2 1501.4,808.9 1488.1,837.5 C1474.9,866.1 1444.8,924.1 1428.1,957.6 C1411.3,991.2 1396.7,1020.9 1387.5,1038.8 C1378.3,1056.6 1376.9,1057.2 1372.9,1064.8 C1368.8,1072.3 1365.6,1076.7 1363.1,1084.2 C1360.7,1091.8 1359.6,1102.1 1358.3,1110.2 C1356.9,1118.3 1356.7,1125.9 1355.0,1132.9 C1353.3,1140.0 1349.5,1145.9 1347.9,1152.4 C1346.2,1158.9 1345.4,1158.4 1345.3,1171.9 C1345.1,1185.4 1346.2,1210.3 1346.9,1233.6 C1347.5,1256.8 1348.8,1298.5 1349.2,1311.5 " fill="none" stroke="#d6d2a6" stroke-width="5.5" stroke-linejoin="round" stroke-linecap="round" />
<path d="M1679.6,373.5 C1683.4,382.7 1698.3,403.3 1702.4,428.7 C1706.4,454.1 1705.6,503.9 1704.0,526.1 C1702.4,548.3 1702.6,545.6 1692.6,561.8 C1682.6,578.0 1668.3,597.0 1643.9,623.5 C1619.6,650.0 1569.3,693.8 1546.5,720.9 C1523.8,747.9 1517.3,766.4 1507.6,785.8 C1497.9,805.2 1501.4,808.9 1488.1,837.5 C1474.9,866.1 1444.8,924.1 1428.1,957.6 C1411.3,991.2 1396.7,1020.9 1387.5,1038.8 C1378.3,1056.6 1376.9,1057.2 1372.9,1064.8 C1368.8,1072.3 1365.6,1076.7 1363.1,1084.2 C1360.7,1091.8 1359.6,1102.1 1358.3,1110.2 C1356.9,1118.3 1356.7,1125.9 1355.0,1132.9 C1353.3,1140.0 1349.5,1145.9 1347.9,1152.4 C1346.2,1158.9 1345.4,1158.4 1345.3,1171.9 C1345.1,1185.4 1346.2,1210.3 1346.9,1233.6 C1347.5,1256.8 1348.8,1298.5 1349.2,1311.5 " fill="none" stroke="#fdfbdc" stroke-width="3.3" stroke-linejoin="round" stroke-linecap="round" />
<path d="M1540.1,373.5 C1542.2,378.9 1556.3,391.9 1553.0,406.0 C1549.8,420.0 1535.2,440.1 1520.6,457.9 C1506.0,475.8 1476.2,503.1 1465.4,513.1 C1454.6,523.1 1461.1,520.1 1455.7,518.0 C1450.2,515.8 1438.3,504.7 1432.9,500.1 C1427.5,495.5 1424.8,492.0 1423.2,490.4 " fill="none" stroke="#dcd8b0" stroke-width="3.2" stroke-linejoin="round" stroke-linecap="round" />
<path d="M1540.1,373.5 C1542.2,378.9 1556.3,391.9 1553.0,406.0 C1549.8,420.0 1535.2,440.1 1520.6,457.9 C1506.0,475.8 1476.2,503.1 1465.4,513.1 C1454.6,523.1 1461.1,520.1 1455.7,518.0 C1450.2,515.8 1438.3,504.7 1432.9,500.1 C1427.5,495.5 1424.8,492.0 1423.2,490.4 " fill="none" stroke="#fbf9e0" stroke-width="1.6" stroke-linejoin="round" stroke-linecap="round" />
<path d="M1046.6,1311.5 C1049.3,1306.1 1056.3,1285.5 1062.8,1279.0 C1069.3,1272.5 1078.0,1273.1 1085.6,1272.5 C1093.1,1272.0 1100.2,1269.3 1108.3,1275.8 C1116.4,1282.3 1129.9,1305.5 1134.3,1311.5 " fill="none" stroke="#dcd8b0" stroke-width="3.2" stroke-linejoin="round" stroke-linecap="round" />
<path d="M1046.6,1311.5 C1049.3,1306.1 1056.3,1285.5 1062.8,1279.0 C1069.3,1272.5 1078.0,1273.1 1085.6,1272.5 C1093.1,1272.0 1100.2,1269.3 1108.3,1275.8 C1116.4,1282.3 1129.9,1305.5 1134.3,1311.5 " fill="none" stroke="#fbf9e0" stroke-width="1.6" stroke-linejoin="round" stroke-linecap="round" />
<path d="M20.8,805.3 C25.6,810.1 41.3,828.0 50.0,834.5 C58.6,840.9 68.9,842.3 72.7,843.9 " fill="none" stroke="#dcd8b0" stroke-width="3.2" stroke-linejoin="round" stroke-linecap="round" />
<path d="M20.8,805.3 C25.6,810.1 41.3,828.0 50.0,834.5 C58.6,840.9 68.9,842.3 72.7,843.9 " fill="none" stroke="#fbf9e0" stroke-width="1.6" stroke-linejoin="round" stroke-linecap="round" />
<path d="M153.9,843.9 C170.1,836.4 226.9,806.6 251.2,798.8 C275.6,791.0 283.7,796.1 299.9,797.2 C316.2,798.2 329.7,800.7 348.6,805.3 C367.6,809.9 401.7,819.9 413.6,824.7 C425.5,829.6 419.0,832.9 420.1,834.5 " fill="none" stroke="#dcd8b0" stroke-width="3.2" stroke-linejoin="round" stroke-linecap="round" />
<path d="M153.9,843.9 C170.1,836.4 226.9,806.6 251.2,798.8 C275.6,791.0 283.7,796.1 299.9,797.2 C316.2,798.2 329.7,800.7 348.6,805.3 C367.6,809.9 401.7,819.9 413.6,824.7 C425.5,829.6 419.0,832.9 420.1,834.5 " fill="none" stroke="#fbf9e0" stroke-width="1.6" stroke-linejoin="round" stroke-linecap="round" />
<path d="M1708.9,548.8 C1717.0,543.9 1738.6,532.0 1757.6,519.6 C1776.5,507.1 1806.3,483.9 1822.5,474.1 C1838.7,464.4 1840.9,461.4 1854.9,461.2 C1869.0,460.9 1894.4,468.2 1906.9,472.5 C1919.3,476.8 1917.7,478.2 1929.6,487.1 C1941.5,496.1 1959.9,521.8 1978.3,526.1 C1996.7,530.4 2025.4,516.1 2040.0,513.1 C2054.6,510.1 2056.2,507.7 2066.0,508.2 C2075.7,508.8 2089.2,515.5 2098.4,516.3 C2107.6,517.2 2113.0,514.7 2121.2,513.1 C2129.3,511.5 2135.2,505.8 2147.1,506.6 C2159.0,507.4 2178.0,518.0 2192.6,518.0 C2207.2,518.0 2222.3,510.7 2234.8,506.6 C2247.2,502.5 2256.4,501.2 2267.2,493.6 C2278.1,486.0 2288.9,468.5 2299.7,461.2 C2310.5,453.9 2315.9,452.5 2332.2,449.8 C2348.4,447.1 2373.8,446.5 2397.1,444.9 C2420.4,443.3 2447.4,434.6 2471.8,440.1 C2496.1,445.5 2503.1,454.9 2543.2,477.4 C2583.2,499.8 2683.9,558.5 2712.0,574.8 " fill="none" stroke="#d3b974" stroke-width="2" stroke-linejoin="round" stroke-linecap="round" stroke-dasharray="7 5"/>
<path d="M2702.3,380.0 C2700.1,385.4 2695.8,398.9 2689.3,412.5 C2682.8,426.0 2668.7,447.6 2663.3,461.2 C2657.9,474.7 2661.7,482.8 2656.8,493.6 C2651.9,504.4 2638.4,519.6 2634.1,526.1 C2629.8,532.6 2631.4,531.5 2630.8,532.6 " fill="none" stroke="#d3b974" stroke-width="2" stroke-linejoin="round" stroke-linecap="round" stroke-dasharray="7 5"/>
<path d="M2712.0,620.2 C2706.0,626.2 2683.3,647.3 2676.3,655.9 C2669.2,664.6 2670.9,664.6 2669.8,672.2 C2668.7,679.7 2673.0,694.9 2669.8,701.4 C2666.5,707.9 2659.5,704.1 2650.3,711.1 C2641.1,718.2 2620.8,731.7 2614.6,743.6 C2608.4,755.5 2596.7,776.1 2613.0,782.5 C2629.2,789.0 2695.5,782.5 2712.0,782.5 " fill="none" stroke="#d3b974" stroke-width="2" stroke-linejoin="round" stroke-linecap="round" stroke-dasharray="7 5"/>
<path d="M1220.3,1215.7 C1224.9,1217.1 1237.9,1223.6 1247.9,1223.8 C1257.9,1224.1 1271.7,1218.4 1280.3,1217.3 C1289.0,1216.2 1294.4,1214.6 1299.8,1217.3 C1305.2,1220.0 1305.2,1230.3 1312.8,1233.6 C1320.4,1236.8 1339.9,1236.3 1345.3,1236.8 " fill="none" stroke="#d3b974" stroke-width="2" stroke-linejoin="round" stroke-linecap="round" stroke-dasharray="7 5"/>
<path d="M1040.1,1240.1 C1042.3,1246.0 1050.9,1269.8 1053.1,1275.8 " fill="none" stroke="#d3b974" stroke-width="2" stroke-linejoin="round" stroke-linecap="round" stroke-dasharray="7 5"/>
<path d="M186.3,853.7 C197.1,852.9 235.0,848.3 251.2,848.9 C267.5,849.4 270.2,852.9 283.7,857.0 C297.2,861.0 318.9,867.8 332.4,873.2 C345.9,878.6 355.7,884.0 364.9,889.4 C374.1,894.9 383.8,903.0 387.6,905.7 " fill="none" stroke="#d3b974" stroke-width="2" stroke-linejoin="round" stroke-linecap="round" stroke-dasharray="7 5"/>
<path d="M257.7,866.7 C258.8,870.5 259.9,883.0 264.2,889.4 C268.6,895.9 277.2,899.2 283.7,905.7 C290.2,912.2 295.6,920.8 303.2,928.4 C310.8,936.0 323.7,944.6 329.2,951.1 C334.6,957.6 337.8,962.0 335.6,967.4 C333.5,972.8 323.7,977.6 316.2,983.6 C308.6,989.5 302.1,999.0 290.2,1003.1 C278.3,1007.1 252.3,1007.1 244.8,1007.9 " fill="none" stroke="#d3b974" stroke-width="2" stroke-linejoin="round" stroke-linecap="round" stroke-dasharray="7 5"/>
<path d="M24.0,1227.1 C40.2,1222.7 91.1,1204.3 121.4,1201.1 C151.7,1197.9 191.7,1206.5 205.8,1207.6 " fill="none" stroke="#d3b974" stroke-width="2" stroke-linejoin="round" stroke-linecap="round" stroke-dasharray="7 5"/>
<path d="M2591.9,376.8 C2593.0,382.7 2602.2,395.7 2598.4,412.5 C2594.6,429.2 2574.6,456.8 2569.2,477.4 C2563.7,498.0 2571.3,522.8 2565.9,535.8 C2560.5,548.8 2547.0,546.1 2536.7,555.3 C2526.4,564.5 2510.2,581.3 2504.2,591.0 C2498.3,600.8 2504.8,605.6 2501.0,613.7 C2497.2,621.9 2488.0,634.3 2481.5,639.7 C2475.0,645.1 2473.4,647.3 2462.0,646.2 C2450.7,645.1 2429.6,636.5 2413.3,633.2 C2397.1,630.0 2378.2,627.3 2364.6,626.7 C2351.1,626.2 2343.0,627.8 2332.2,630.0 C2321.3,632.1 2310.5,635.9 2299.7,639.7 C2288.9,643.5 2278.1,651.1 2267.2,652.7 C2256.4,654.3 2248.3,647.8 2234.8,649.4 C2221.3,651.1 2199.6,659.7 2186.1,662.4 C2172.6,665.1 2160.7,661.9 2153.6,665.7 C2146.6,669.5 2147.7,676.0 2143.9,685.2 C2140.1,694.4 2137.4,713.3 2130.9,720.9 C2124.4,728.4 2116.8,729.0 2104.9,730.6 C2093.0,732.2 2070.3,724.1 2059.5,730.6 C2048.7,737.1 2043.2,763.1 2040.0,769.6 " fill="none" stroke="#a8d27a" stroke-width="1.6" stroke-linejoin="round" stroke-linecap="round" stroke-dasharray="6 5"/>
<path d="M2173.1,844.0 C2178.0,852.1 2192.0,883.5 2202.3,892.7 C2212.6,901.9 2225.0,891.1 2234.8,899.2 C2244.5,907.3 2246.1,933.8 2260.8,941.4 C2275.4,949.0 2305.7,941.4 2322.4,944.6 C2339.2,947.9 2352.2,953.3 2361.4,960.9 C2370.6,968.4 2377.6,980.3 2377.6,990.1 C2377.6,999.8 2363.6,1004.2 2361.4,1019.3 C2359.2,1034.5 2360.8,1062.6 2364.6,1081.0 C2368.4,1099.4 2376.0,1115.1 2384.1,1129.7 C2392.2,1144.3 2407.9,1156.7 2413.3,1168.6 C2418.7,1180.5 2418.7,1189.2 2416.6,1201.1 C2414.4,1213.0 2405.8,1227.6 2400.3,1240.1 C2394.9,1252.5 2384.7,1263.9 2384.1,1275.8 C2383.6,1287.7 2394.9,1305.5 2397.1,1311.5 " fill="none" stroke="#a8d27a" stroke-width="1.6" stroke-linejoin="round" stroke-linecap="round" stroke-dasharray="6 5"/>
<path d="M2040.0,821.5 C2042.2,820.4 2047.6,811.8 2053.0,815.0 C2058.4,818.3 2069.2,836.7 2072.5,841.0 " fill="none" stroke="#a8d27a" stroke-width="1.6" stroke-linejoin="round" stroke-linecap="round" stroke-dasharray="6 5"/>
<path d="M2147.1,818.3 C2142.8,819.9 2130.9,824.2 2121.2,828.0 C2111.4,831.8 2094.1,838.8 2088.7,841.0 " fill="none" stroke="#a8d27a" stroke-width="1.6" stroke-linejoin="round" stroke-linecap="round" stroke-dasharray="6 5"/>
<path d="M2598.4,1019.3 C2600.5,1016.1 2605.4,1005.2 2611.4,999.8 C2617.3,994.4 2626.5,990.6 2634.1,986.8 C2641.7,983.1 2648.7,979.3 2656.8,977.1 C2664.9,974.9 2675.2,972.2 2682.8,973.9 C2690.3,975.5 2699.0,984.7 2702.3,986.8 " fill="none" stroke="#d9b96c" stroke-width="1.6" stroke-linejoin="round" stroke-linecap="round" stroke-dasharray="2 6"/>
<path d="M2604.9,1032.3 C2607.6,1033.9 2616.8,1035.5 2621.1,1042.0 C2625.4,1048.5 2629.8,1062.6 2630.8,1071.2 C2631.9,1079.9 2626.0,1086.9 2627.6,1094.0 C2629.2,1101.0 2635.7,1108.6 2640.6,1113.4 C2645.4,1118.3 2649.8,1120.7 2656.8,1123.2 C2663.8,1125.6 2673.6,1127.5 2682.8,1128.1 C2692.0,1128.6 2707.1,1126.7 2712.0,1126.4 " fill="none" stroke="#d9b96c" stroke-width="1.6" stroke-linejoin="round" stroke-linecap="round" stroke-dasharray="2 6"/>
<polyline points="2156.9,670.5 2166.6,670.5" fill="none" stroke="#8fc0d8" stroke-width="1.5" stroke-linejoin="round" stroke-linecap="round" />
<polyline points="2171.5,668.3 2176.3,668.3" fill="none" stroke="#8fc0d8" stroke-width="1.5" stroke-linejoin="round" stroke-linecap="round" />
<polyline points="2152.0,684.5 2156.9,684.5" fill="none" stroke="#8fc0d8" stroke-width="1.5" stroke-linejoin="round" stroke-linecap="round" />
<polyline points="2173.7,682.6 2178.9,682.6" fill="none" stroke="#8fc0d8" stroke-width="1.5" stroke-linejoin="round" stroke-linecap="round" />
<polyline points="2158.5,690.7 2171.5,690.7" fill="none" stroke="#8fc0d8" stroke-width="1.5" stroke-linejoin="round" stroke-linecap="round" />
<polyline points="2150.4,696.5 2155.6,696.5" fill="none" stroke="#8fc0d8" stroke-width="1.5" stroke-linejoin="round" stroke-linecap="round" />
<polyline points="2158.5,704.6 2169.9,704.6" fill="none" stroke="#8fc0d8" stroke-width="1.5" stroke-linejoin="round" stroke-linecap="round" />
<polyline points="2146.5,712.7 2159.5,712.7" fill="none" stroke="#8fc0d8" stroke-width="1.5" stroke-linejoin="round" stroke-linecap="round" />
<path d="M1806.3,720.9 C1810.0,726.3 1833.8,732.2 1829.0,753.3 C1824.1,774.4 1783.5,824.2 1777.0,847.5 C1770.5,870.7 1785.7,883.0 1790.0,892.7 C1794.4,902.4 1796.5,892.2 1803.0,905.7 C1809.5,919.2 1824.1,957.6 1829.0,973.9 C1833.8,990.1 1834.4,994.4 1832.2,1003.1 C1830.1,1011.7 1819.8,1017.1 1816.0,1025.8 C1812.2,1034.5 1810.0,1040.4 1809.5,1055.0 C1809.0,1069.6 1809.5,1097.8 1812.7,1113.4 C1816.0,1129.1 1823.6,1139.4 1829.0,1149.2 C1834.4,1158.9 1842.5,1168.1 1845.2,1171.9 " fill="none" stroke="#b0a08e" stroke-width="1.6" stroke-linejoin="round" stroke-linecap="round" stroke-dasharray="10 4 2 4"/>
<path d="M1887.4,1175.1 C1890.1,1178.4 1901.5,1184.9 1903.6,1194.6 C1905.8,1204.3 1911.2,1214.1 1900.4,1233.6 C1889.6,1253.0 1849.0,1298.5 1838.7,1311.5 " fill="none" stroke="#b0a08e" stroke-width="1.6" stroke-linejoin="round" stroke-linecap="round" stroke-dasharray="10 4 2 4"/>
<defs><g id="tr" fill="none" stroke="#b9cb7f" stroke-width="1.5"><circle cx="0" cy="-10" r="4.6"/><path d="M0,-5.4 L0,3.5 M10.5,-15.5 L15.2,-2.5 L5.8,-2.5 Z M10.5,-2.5 L10.5,3.5"/></g><g id="cf" fill="none" stroke="#b9cb7f" stroke-width="1.5"><path d="M0,-17 L7,0 L-7,0 Z M0,0 L0,8.6"/></g></defs>
<use href="#tr" x="48" y="399"/>
<use href="#tr" x="124" y="400"/>
<use href="#tr" x="204" y="389"/>
<use href="#tr" x="256" y="405"/>
<use href="#tr" x="336" y="393"/>
<use href="#tr" x="1511" y="397"/>
<use href="#tr" x="1572" y="394"/>
<use href="#tr" x="1640" y="396"/>
<use href="#tr" x="1707" y="400"/>
<use href="#tr" x="1787" y="406"/>
<use href="#tr" x="1862" y="407"/>
<use href="#tr" x="1939" y="408"/>
<use href="#tr" x="2005" y="391"/>
<use href="#tr" x="2084" y="407"/>
<use href="#tr" x="2157" y="399"/>
<use href="#tr" x="2223" y="392"/>
<use href="#tr" x="2299" y="399"/>
<use href="#tr" x="2353" y="389"/>
<use href="#tr" x="2443" y="408"/>
<use href="#tr" x="2491" y="404"/>
<use href="#tr" x="2573" y="391"/>
<use href="#tr" x="2641" y="403"/>
<use href="#tr" x="2732" y="389"/>
<use href="#tr" x="24" y="445"/>
<use href="#tr" x="99" y="451"/>
<use href="#tr" x="176" y="464"/>
<use href="#tr" x="236" y="464"/>
<use href="#tr" x="302" y="446"/>
<use href="#tr" x="1445" y="456"/>
<use href="#tr" x="1536" y="445"/>
<use href="#tr" x="1608" y="453"/>
<use href="#tr" x="1682" y="451"/>
<use href="#tr" x="1755" y="459"/>
<use href="#tr" x="1805" y="445"/>
<use href="#tr" x="1898" y="463"/>
<use href="#tr" x="1956" y="453"/>
<use href="#tr" x="2039" y="450"/>
<use href="#tr" x="2104" y="450"/>
<use href="#tr" x="2176" y="456"/>
<use href="#tr" x="2246" y="452"/>
<use href="#tr" x="2333" y="445"/>
<use href="#tr" x="2398" y="459"/>
<use href="#tr" x="2462" y="448"/>
<use href="#tr" x="2550" y="449"/>
<use href="#tr" x="2602" y="453"/>
<use href="#tr" x="2690" y="446"/>
<use href="#tr" x="50" y="507"/>
<use href="#tr" x="139" y="509"/>
<use href="#tr" x="211" y="503"/>
<use href="#tr" x="267" y="513"/>
<use href="#tr" x="1438" y="504"/>
<use href="#tr" x="1504" y="517"/>
<use href="#tr" x="1573" y="510"/>
<use href="#tr" x="1633" y="507"/>
<use href="#tr" x="1703" y="501"/>
<use href="#tr" x="1787" y="506"/>
<use href="#tr" x="1866" y="501"/>
<use href="#tr" x="1941" y="514"/>
<use href="#tr" x="2014" y="518"/>
<use href="#tr" x="2085" y="512"/>
<use href="#tr" x="2128" y="515"/>
<use href="#tr" x="2205" y="506"/>
<use href="#tr" x="2293" y="510"/>
<use href="#tr" x="2357" y="519"/>
<use href="#tr" x="2436" y="507"/>
<use href="#tr" x="2496" y="517"/>
<use href="#tr" x="2575" y="516"/>
<use href="#tr" x="2643" y="504"/>
<use href="#tr" x="2721" y="516"/>
<use href="#tr" x="105" y="572"/>
<use href="#tr" x="174" y="556"/>
<use href="#tr" x="240" y="573"/>
<use href="#tr" x="1384" y="568"/>
<use href="#tr" x="1469" y="564"/>
<use href="#tr" x="1542" y="568"/>
<use href="#tr" x="1602" y="563"/>
<use href="#tr" x="1676" y="570"/>
<use href="#tr" x="1745" y="570"/>
<use href="#tr" x="1819" y="561"/>
<use href="#tr" x="1893" y="570"/>
<use href="#tr" x="1950" y="564"/>
<use href="#tr" x="2034" y="574"/>
<use href="#tr" x="2122" y="563"/>
<use href="#tr" x="2193" y="572"/>
<use href="#tr" x="2244" y="565"/>
<use href="#tr" x="2312" y="572"/>
<use href="#tr" x="2401" y="574"/>
<use href="#tr" x="2477" y="569"/>
<use href="#tr" x="2547" y="567"/>
<use href="#tr" x="2599" y="568"/>
<use href="#tr" x="2668" y="559"/>
<use href="#tr" x="65" y="613"/>
<use href="#tr" x="115" y="614"/>
<use href="#tr" x="212" y="616"/>
<use href="#tr" x="502" y="624"/>
<use href="#tr" x="1439" y="620"/>
<use href="#tr" x="1504" y="615"/>
<use href="#tr" x="1574" y="627"/>
<use href="#tr" x="1646" y="622"/>
<use href="#tr" x="1711" y="625"/>
<use href="#tr" x="1797" y="615"/>
<use href="#tr" x="1843" y="627"/>
<use href="#tr" x="1941" y="622"/>
<use href="#tr" x="1998" y="626"/>
<use href="#tr" x="2062" y="617"/>
<use href="#tr" x="2134" y="624"/>
<use href="#tr" x="2210" y="617"/>
<use href="#tr" x="2294" y="631"/>
<use href="#tr" x="2353" y="626"/>
<use href="#tr" x="2429" y="629"/>
<use href="#tr" x="2507" y="617"/>
<use href="#tr" x="2567" y="612"/>
<use href="#tr" x="2647" y="620"/>
<use href="#tr" x="2710" y="619"/>
<use href="#tr" x="318" y="679"/>
<use href="#tr" x="1381" y="675"/>
<use href="#tr" x="1463" y="682"/>
<use href="#tr" x="1516" y="675"/>
<use href="#tr" x="1602" y="678"/>
<use href="#tr" x="1667" y="680"/>
<use href="#tr" x="1763" y="676"/>
<use href="#tr" x="1821" y="670"/>
<use href="#tr" x="1885" y="681"/>
<use href="#tr" x="1952" y="686"/>
<use href="#tr" x="2049" y="670"/>
<use href="#tr" x="2122" y="675"/>
<use href="#tr" x="2189" y="683"/>
<use href="#tr" x="2245" y="682"/>
<use href="#tr" x="2329" y="684"/>
<use href="#tr" x="2388" y="683"/>
<use href="#tr" x="2483" y="681"/>
<use href="#tr" x="2541" y="670"/>
<use href="#tr" x="2612" y="675"/>
<use href="#tr" x="2691" y="682"/>
<use href="#tr" x="277" y="726"/>
<use href="#tr" x="358" y="727"/>
<use href="#tr" x="1347" y="741"/>
<use href="#tr" x="1412" y="729"/>
<use href="#tr" x="1483" y="726"/>
<use href="#tr" x="1577" y="739"/>
<use href="#tr" x="1630" y="728"/>
<use href="#tr" x="1709" y="739"/>
<use href="#tr" x="1794" y="739"/>
<use href="#tr" x="1859" y="727"/>
<use href="#tr" x="1925" y="728"/>
<use href="#tr" x="2001" y="735"/>
<use href="#tr" x="2062" y="729"/>
<use href="#tr" x="2153" y="725"/>
<use href="#tr" x="2226" y="742"/>
<use href="#tr" x="2302" y="732"/>
<use href="#tr" x="2362" y="736"/>
<use href="#tr" x="2436" y="744"/>
<use href="#tr" x="2510" y="730"/>
<use href="#tr" x="2588" y="734"/>
<use href="#tr" x="2651" y="739"/>
<use href="#tr" x="2704" y="739"/>
<use href="#tr" x="1375" y="781"/>
<use href="#tr" x="1446" y="784"/>
<use href="#tr" x="1742" y="789"/>
<use href="#tr" x="1828" y="788"/>
<use href="#tr" x="1882" y="798"/>
<use href="#tr" x="1971" y="787"/>
<use href="#tr" x="2032" y="791"/>
<use href="#tr" x="2111" y="784"/>
<use href="#tr" x="2164" y="784"/>
<use href="#tr" x="2261" y="783"/>
<use href="#tr" x="2323" y="784"/>
<use href="#tr" x="2387" y="783"/>
<use href="#tr" x="2465" y="783"/>
<use href="#tr" x="2525" y="782"/>
<use href="#tr" x="2601" y="790"/>
<use href="#tr" x="2670" y="780"/>
<use href="#tr" x="1798" y="838"/>
<use href="#tr" x="1849" y="853"/>
<use href="#tr" x="1916" y="844"/>
<use href="#tr" x="1995" y="850"/>
<use href="#cf" x="2086" y="839"/>
<use href="#cf" x="2152" y="851"/>
<use href="#cf" x="2227" y="847"/>
<use href="#cf" x="2302" y="843"/>
<use href="#cf" x="2357" y="841"/>
<use href="#cf" x="2441" y="846"/>
<use href="#cf" x="2497" y="839"/>
<use href="#cf" x="2583" y="848"/>
<use href="#cf" x="2655" y="844"/>
<use href="#cf" x="2720" y="839"/>
<use href="#tr" x="1811" y="909"/>
<use href="#tr" x="1896" y="905"/>
<use href="#tr" x="1972" y="909"/>
<use href="#cf" x="2031" y="904"/>
<use href="#cf" x="2106" y="894"/>
<use href="#cf" x="2191" y="904"/>
<use href="#cf" x="2262" y="896"/>
<use href="#cf" x="2325" y="901"/>
<use href="#cf" x="2403" y="894"/>
<use href="#cf" x="2463" y="902"/>
<use href="#cf" x="2526" y="903"/>
<use href="#cf" x="2620" y="900"/>
<use href="#cf" x="2689" y="904"/>
<use href="#tr" x="1799" y="966"/>
<use href="#cf" x="1852" y="951"/>
<use href="#cf" x="1922" y="957"/>
<use href="#cf" x="2001" y="959"/>
<use href="#cf" x="2068" y="965"/>
<use href="#cf" x="2137" y="957"/>
<use href="#cf" x="2228" y="964"/>
<use href="#cf" x="2282" y="953"/>
<use href="#cf" x="2370" y="948"/>
<use href="#cf" x="2420" y="959"/>
<use href="#cf" x="2505" y="951"/>
<use href="#cf" x="2562" y="952"/>
<use href="#cf" x="2657" y="957"/>
<use href="#cf" x="2735" y="964"/>
<use href="#cf" x="1835" y="1007"/>
<use href="#cf" x="1886" y="1014"/>
<use href="#cf" x="1961" y="1021"/>
<use href="#cf" x="2046" y="1023"/>
<use href="#cf" x="2112" y="1005"/>
<use href="#cf" x="2182" y="1015"/>
<use href="#cf" x="2252" y="1010"/>
<use href="#cf" x="2331" y="1022"/>
<use href="#cf" x="2383" y="1017"/>
<use href="#cf" x="2464" y="1014"/>
<use href="#cf" x="2553" y="1023"/>
<use href="#cf" x="2617" y="1008"/>
<use href="#cf" x="2697" y="1008"/>
<use href="#tr" x="1780" y="1062"/>
<use href="#cf" x="1852" y="1080"/>
<use href="#cf" x="1921" y="1063"/>
<use href="#cf" x="1989" y="1063"/>
<use href="#cf" x="2067" y="1078"/>
<use href="#cf" x="2130" y="1064"/>
<use href="#cf" x="2230" y="1080"/>
<use href="#cf" x="2303" y="1065"/>
<use href="#cf" x="2355" y="1079"/>
<use href="#cf" x="2432" y="1074"/>
<use href="#cf" x="2498" y="1060"/>
<use href="#cf" x="2571" y="1075"/>
<use href="#cf" x="2657" y="1071"/>
<use href="#cf" x="2719" y="1071"/>
<use href="#tr" x="247" y="1120"/>
<use href="#tr" x="323" y="1133"/>
<use href="#cf" x="1818" y="1126"/>
<use href="#cf" x="1893" y="1133"/>
<use href="#cf" x="1980" y="1127"/>
<use href="#cf" x="2034" y="1128"/>
<use href="#cf" x="2094" y="1125"/>
<use href="#cf" x="2191" y="1132"/>
<use href="#cf" x="2238" y="1133"/>
<use href="#cf" x="2320" y="1136"/>
<use href="#cf" x="2392" y="1120"/>
<use href="#cf" x="2470" y="1134"/>
<use href="#cf" x="2538" y="1133"/>
<use href="#cf" x="2619" y="1123"/>
<use href="#cf" x="2678" y="1126"/>
<use href="#tr" x="263" y="1179"/>
<use href="#tr" x="348" y="1175"/>
<use href="#cf" x="1864" y="1192"/>
<use href="#cf" x="1914" y="1172"/>
<use href="#cf" x="1999" y="1180"/>
<use href="#cf" x="2085" y="1189"/>
<use href="#cf" x="2139" y="1180"/>
<use href="#cf" x="2219" y="1190"/>
<use href="#cf" x="2278" y="1180"/>
<use href="#cf" x="2347" y="1185"/>
<use href="#cf" x="2417" y="1191"/>
<use href="#cf" x="2505" y="1183"/>
<use href="#cf" x="2563" y="1177"/>
<use href="#cf" x="2647" y="1189"/>
<use href="#cf" x="2721" y="1178"/>
<use href="#tr" x="93" y="1232"/>
<use href="#tr" x="158" y="1246"/>
<use href="#tr" x="224" y="1239"/>
<use href="#tr" x="312" y="1235"/>
<use href="#tr" x="389" y="1246"/>
<use href="#cf" x="1810" y="1243"/>
<use href="#cf" x="1889" y="1239"/>
<use href="#cf" x="1967" y="1241"/>
<use href="#cf" x="2034" y="1229"/>
<use href="#cf" x="2117" y="1245"/>
<use href="#cf" x="2180" y="1240"/>
<use href="#cf" x="2245" y="1246"/>
<use href="#cf" x="2330" y="1232"/>
<use href="#cf" x="2406" y="1248"/>
<use href="#cf" x="2463" y="1248"/>
<use href="#cf" x="2539" y="1232"/>
<use href="#cf" x="2619" y="1235"/>
<use href="#cf" x="2691" y="1240"/>
<use href="#tr" x="43" y="1295"/>
<use href="#tr" x="139" y="1294"/>
<use href="#tr" x="201" y="1301"/>
<use href="#tr" x="270" y="1294"/>
<use href="#tr" x="347" y="1300"/>
<use href="#tr" x="406" y="1286"/>
<use href="#tr" x="1785" y="1302"/>
<use href="#cf" x="1868" y="1294"/>
<use href="#cf" x="1925" y="1285"/>
<use href="#cf" x="1993" y="1290"/>
<use href="#cf" x="2086" y="1286"/>
<use href="#cf" x="2158" y="1294"/>
<use href="#cf" x="2214" y="1289"/>
<use href="#cf" x="2303" y="1288"/>
<use href="#cf" x="2362" y="1294"/>
<use href="#cf" x="2422" y="1288"/>
<use href="#cf" x="2520" y="1300"/>
<use href="#cf" x="2583" y="1302"/>
<use href="#cf" x="2635" y="1298"/>
<use href="#cf" x="2728" y="1289"/>
<path d="M232.0,755.4 L240.0,742.6 L248.0,755.4Z" fill="#d6a14c"/>
<text x="241.0" y="777.7" font-family="Liberation Sans" font-size="21" fill="#a58b5e" text-anchor="middle" stroke="rgba(255,255,255,0.55)" stroke-width="3" paint-order="stroke" >Cupit Mary</text>
<text x="241.0" y="801.4" font-family="Liberation Sans" font-size="21" fill="#a58b5e" text-anchor="middle" stroke="rgba(255,255,255,0.55)" stroke-width="3" paint-order="stroke" >Mountain</text>
<text x="241.0" y="824.8" font-family="Liberation Sans" font-size="21" fill="#a58b5e" text-anchor="middle" stroke="rgba(255,255,255,0.55)" stroke-width="3" paint-order="stroke" >1879 m</text>
<path d="M108.5,846.4 L116.5,833.6 L124.5,846.4Z" fill="#d6a14c"/>
<text x="116.5" y="870.0" font-family="Liberation Sans" font-size="21" fill="#a58b5e" text-anchor="middle" stroke="rgba(255,255,255,0.55)" stroke-width="3" paint-order="stroke" >Koch Mountain</text>
<text x="116.5" y="893.3" font-family="Liberation Sans" font-size="21" fill="#a58b5e" text-anchor="middle" stroke="rgba(255,255,255,0.55)" stroke-width="3" paint-order="stroke" >1855 m</text>
<path d="M669.5,963.4 L677.5,950.6 L685.5,963.4Z" fill="#d6a14c"/>
<text x="677.5" y="995.0" font-family="Liberation Sans" font-size="21" fill="#a58b5e" text-anchor="middle" stroke="rgba(255,255,255,0.55)" stroke-width="3" paint-order="stroke" >1971 m</text>
<path d="M672.8,1171.4 L680.8,1158.6 L688.8,1171.4Z" fill="#d6a14c"/>
<text x="680.8" y="1201.0" font-family="Liberation Sans" font-size="21" fill="#a58b5e" text-anchor="middle" stroke="rgba(255,255,255,0.55)" stroke-width="3" paint-order="stroke" >1732 m</text>
<path d="M1939.5,849.4 L1947.5,836.6 L1955.5,849.4Z" fill="#d6a14c"/>
<text x="1947.5" y="872.6" font-family="Liberation Sans" font-size="21" fill="#a58b5e" text-anchor="middle" stroke="rgba(255,255,255,0.55)" stroke-width="3" paint-order="stroke" >Gerdine</text>
<text x="1947.5" y="896.0" font-family="Liberation Sans" font-size="21" fill="#a58b5e" text-anchor="middle" stroke="rgba(255,255,255,0.55)" stroke-width="3" paint-order="stroke" >Butte</text>
<text x="1947.5" y="920.3" font-family="Liberation Sans" font-size="21" fill="#a58b5e" text-anchor="middle" stroke="rgba(255,255,255,0.55)" stroke-width="3" paint-order="stroke" >1979 m</text>
<path d="M1821.0,1165.4 L1829.0,1152.6 L1837.0,1165.4Z" fill="#d6a14c"/>
<text x="1830.6" y="1184.9" font-family="Liberation Sans" font-size="21" fill="#a58b5e" text-anchor="middle" stroke="rgba(255,255,255,0.55)" stroke-width="3" paint-order="stroke" >The Twins</text>
<text x="1830.6" y="1209.2" font-family="Liberation Sans" font-size="21" fill="#a58b5e" text-anchor="middle" stroke="rgba(255,255,255,0.55)" stroke-width="3" paint-order="stroke" >2244 m</text>
<text x="986" y="876" font-family="Liberation Sans" font-style="italic" font-size="28" fill="#98b2a0" text-anchor="middle" stroke="rgba(246,242,189,0.5)" stroke-width="3" paint-order="stroke" letter-spacing="0.6">Waldo Lake</text>
<text x="0" y="0" font-family="Liberation Sans" font-size="18" fill="#7db868" transform="translate(1752,849) rotate(80.5)" letter-spacing="0.1">Deschutes National Forest</text>
<text x="0" y="0" font-family="Liberation Sans" font-size="20" fill="#7db868" transform="translate(27,648) rotate(73)" letter-spacing="0.3">ke Wilderness</text>
<defs><radialGradient id="shg" cx="0.5" cy="0.5" r="0.5"><stop offset="0" stop-color="#000" stop-opacity="0.45"/><stop offset="1" stop-color="#000" stop-opacity="0"/></radialGradient><linearGradient id="mkg" x1="0" y1="0" x2="0" y2="1"><stop offset="0" stop-color="#6aa2dc"/><stop offset="1" stop-color="#2c6fc0"/></linearGradient></defs>
<ellipse cx="911" cy="930" rx="38" ry="20" fill="url(#shg)" transform="rotate(-38 911 930)"/>
<path d="M881,957 C876,947 856.3,918 856.3,902 A24.7,24.7 0 0 1 905.7,902 C905.7,918 886,947 881,957Z" fill="url(#mkg)" stroke="#2e66a6" stroke-width="2"/>
<path d="M881,951 C877,942 859,916 859,902 A22,22 0 0 1 903,902 C903,916 885,942 881,951Z" fill="none" stroke="#7fb0e0" stroke-width="1" opacity="0.5"/>
<circle cx="881" cy="902.3" r="11.3" fill="#3a74b8"/>
<circle cx="881" cy="902.3" r="8.7" fill="#fff"/>
</svg>
<div class="a" style="left:-4px;top:20px;width:62px;height:128px;border:4px solid rgba(0,0,0,0.2);border-radius:8px;background-clip:padding-box"></div>
<div class="a" style="left:0;top:24px;width:54px;height:120px;background:#fff;border-radius:0 5px 5px 0"></div>
<div class="a" style="left:0;top:82px;width:54px;height:2px;background:#ccc"></div>
<div class="a" style="left:13px;top:56px;width:24px;height:5px;background:#000"></div>
<div class="a" style="left:22.5px;top:46px;width:5px;height:25px;background:#000"></div>
<div class="a" style="left:13px;top:115.5px;width:24px;height:5px;background:#000"></div>
<div class="a" style="left:2561px;top:894px;width:123px;height:34px;background:rgba(255,255,255,0.8)"></div>
<div class="a" style="left:2571px;top:903px;width:24px;height:8px;background:#5a7ddc"></div>
<div class="a" style="left:2571px;top:911px;width:24px;height:8px;background:#f8d348;border-bottom:2px solid #d9b23a"></div>
<div class="t" style="left:2601px;top:898.8px;font-size:24px;color:#2a78a8">Leaflet</div>
</div>

<div class="a" style="left:2724px;top:408px;width:700px;height:703px;border:5px solid #000;border-top-width:7px;border-bottom-width:7px;border-radius:4px;background:#fff"></div>
<div class="t" style="left:2753px;top:444.2px;font-size:47px;color:#000;font-weight:bold;transform:scaleX(0.646);transform-origin:0 0"><span>Forecasted AQI</span><span style="font-size:28px;position:relative;top:18.5px">PM2.5</span></div>
<div class="a" style="left:2747px;top:537.8px;width:39px;height:58.5px;background:#fdfa4d"></div>
<div class="t" style="left:2806px;top:543.4px;font-size:46.5px;color:#000;transform:scaleX(0.646);transform-origin:0 0"><span>Moderate (AQI</span><span style="font-size:28.5px;position:relative;top:18.5px">PM2.5</span><span> 50-100)</span></div>
<div class="a" style="left:2747px;top:630.6px;width:39px;height:58.5px;background:#ef8535"></div>
<div class="t" style="left:2806px;top:636.6px;font-size:46.5px;color:#000;transform:scaleX(0.646);transform-origin:0 0"><span>Unhealthy for Sens. (AQI</span><span style="font-size:28.5px;position:relative;top:18.5px">PM2.5</span><span> 100-150)</span></div>
<div class="a" style="left:2747px;top:723.5px;width:39px;height:58.5px;background:#e93323"></div>
<div class="t" style="left:2806px;top:729.8px;font-size:46.5px;color:#000;transform:scaleX(0.646);transform-origin:0 0"><span>Unhealthy (AQI</span><span style="font-size:28.5px;position:relative;top:18.5px">PM2.5</span><span> 150-200)</span></div>
<div class="a" style="left:2747px;top:816.3px;width:39px;height:58.5px;background:#7f3f98"></div>
<div class="t" style="left:2806px;top:823.0px;font-size:46.5px;color:#000;transform:scaleX(0.646);transform-origin:0 0"><span>Very Unhealthy (AQI</span><span style="font-size:28.5px;position:relative;top:18.5px">PM2.5</span><span> 200-300)</span></div>
<div class="a" style="left:2747px;top:909.2px;width:39px;height:58.5px;background:#6e1523"></div>
<div class="t" style="left:2806px;top:916.2px;font-size:46.5px;color:#000;transform:scaleX(0.646);transform-origin:0 0"><span>Hazardous (AQI</span><span style="font-size:28.5px;position:relative;top:18.5px">PM2.5</span><span> 300-500)</span></div>
<div class="a" style="left:2747px;top:1002.0px;width:39px;height:58.5px;background:#000000"></div>
<div class="t" style="left:2806px;top:1009.4px;font-size:46.5px;color:#000;transform:scaleX(0.646);transform-origin:0 0"><span>AQI</span><span style="font-size:28.5px;position:relative;top:18.5px">PM2.5</span><span> 500+</span></div>
<div class="a" style="left:2748px;top:1173px;width:53px;height:79px;border-radius:50%;background:#fdfb4e"></div>
<div class="t" style="left:2826px;top:1192.2px;font-size:46.5px;color:#000;transform:scaleX(0.646);transform-origin:0 0"><span>Recorded Sensor Data</span></div>
<svg class="a" style="left:0;top:1300px" width="3352" height="488" viewBox="0 1300 3352 488">
<defs><clipPath id="pc"><rect x="124" y="1308" width="2932" height="387"/></clipPath></defs>
<rect x="124" y="1308" width="2932" height="387" fill="#e5ecf6"/>
<rect x="124" y="1626.2" width="2932" height="2" fill="#fff"/>
<rect x="124" y="1558.3" width="2932" height="2" fill="#fff"/>
<rect x="124" y="1490.5" width="2932" height="2" fill="#fff"/>
<rect x="124" y="1422.6" width="2932" height="2" fill="#fff"/>
<rect x="184.1" y="1308" width="2" height="387" fill="#fff"/>
<rect x="550.6" y="1308" width="2" height="387" fill="#fff"/>
<rect x="917.1" y="1308" width="2" height="387" fill="#fff"/>
<rect x="1283.6" y="1308" width="2" height="387" fill="#fff"/>
<rect x="1650.1" y="1308" width="2" height="387" fill="#fff"/>
<rect x="2016.6" y="1308" width="2" height="387" fill="#fff"/>
<rect x="2383.1" y="1308" width="2" height="387" fill="#fff"/>
<rect x="2749.6" y="1308" width="2" height="387" fill="#fff"/>
<polyline clip-path="url(#pc)" points="124.0,1359.5 307.2,1508.4 490.5,1637.7 673.8,1651.2 857.0,1630.6 1040.2,1611.2 1223.5,1661.6 1406.8,1682.4 1590.0,1685.2 1773.2,1691.9 1956.5,1691.9 2139.8,1693.6 2323.0,1695.0 2506.2,1695.0 2689.5,1695.0 2872.8,1695.0 3056.0,1695.0" fill="none" stroke="#636efa" stroke-width="4" stroke-linejoin="round"/>
<polyline clip-path="url(#pc)" points="124.0,1344.3 307.2,1443.3 490.5,1512.2 673.8,1476.9 857.0,1487.4 1040.2,1483.0 1223.5,1501.0 1406.8,1505.7 1590.0,1513.5 1773.2,1523.4 1956.5,1533.2 2139.8,1570.5 2323.0,1595.3 2506.2,1604.1 2689.5,1603.1 2872.8,1602.1 3056.0,1606.8" fill="none" stroke="#de5a3e" stroke-width="4" stroke-linejoin="round"/>
<rect x="124" y="1308" width="2932" height="47.8" fill="rgb(239,126,41)" fill-opacity="0.2"/>
<rect x="124" y="1355.8" width="2932" height="169.6" fill="rgb(254,246,81)" fill-opacity="0.2"/>
<rect x="124" y="1525.4" width="2932" height="169.6" fill="rgb(124,246,71)" fill-opacity="0.2"/>
<rect x="122" y="1353.8" width="2936" height="4" fill="rgb(150,160,185)" fill-opacity="0.8"/>
<rect x="122" y="1523.4" width="2936" height="4" fill="rgb(150,160,185)" fill-opacity="0.8"/>
<rect x="122" y="1308" width="4" height="387" fill="rgb(185,196,216)" fill-opacity="0.85"/>
<rect x="3054" y="1308" width="4" height="387" fill="rgb(185,196,216)" fill-opacity="0.85"/>
<rect x="124" y="1694.0" width="2932" height="2" fill="rgb(70,85,140)" fill-opacity="0.25"/>
</svg>
<div class="t" style="right:3230.5px;top:1681.5px;font-size:26px;color:#2a3f5f;letter-spacing:0.7px">0</div>
<div class="t" style="right:3230.5px;top:1613.7px;font-size:26px;color:#2a3f5f;letter-spacing:0.7px">20</div>
<div class="t" style="right:3230.5px;top:1545.8px;font-size:26px;color:#2a3f5f;letter-spacing:0.7px">40</div>
<div class="t" style="right:3230.5px;top:1478.0px;font-size:26px;color:#2a3f5f;letter-spacing:0.7px">60</div>
<div class="t" style="right:3230.5px;top:1410.1px;font-size:26px;color:#2a3f5f;letter-spacing:0.7px">80</div>
<div class="t" style="right:3230.5px;top:1342.3px;font-size:26px;color:#2a3f5f;letter-spacing:0.7px">100</div>
<div class="t" style="left:185.45px;top:1699.6px;font-size:27px;color:#2a3f5f;transform:translateX(-50%);letter-spacing:0.7px">06:00</div>
<div class="t" style="left:185.1px;top:1729.1px;font-size:27px;color:#2a3f5f;transform:translateX(-50%);">Sep 24, 2023</div>
<div class="t" style="left:551.95px;top:1699.6px;font-size:27px;color:#2a3f5f;transform:translateX(-50%);letter-spacing:0.7px">12:00</div>
<div class="t" style="left:918.45px;top:1699.6px;font-size:27px;color:#2a3f5f;transform:translateX(-50%);letter-spacing:0.7px">18:00</div>
<div class="t" style="left:1284.9499999999998px;top:1699.6px;font-size:27px;color:#2a3f5f;transform:translateX(-50%);letter-spacing:0.7px">00:00</div>
<div class="t" style="left:1284.6px;top:1729.1px;font-size:27px;color:#2a3f5f;transform:translateX(-50%);">Sep 25, 2023</div>
<div class="t" style="left:1651.4499999999998px;top:1699.6px;font-size:27px;color:#2a3f5f;transform:translateX(-50%);letter-spacing:0.7px">06:00</div>
<div class="t" style="left:2017.9499999999998px;top:1699.6px;font-size:27px;color:#2a3f5f;transform:translateX(-50%);letter-spacing:0.7px">12:00</div>
<div class="t" style="left:2384.45px;top:1699.6px;font-size:27px;color:#2a3f5f;transform:translateX(-50%);letter-spacing:0.7px">18:00</div>
<div class="t" style="left:2750.95px;top:1699.6px;font-size:27px;color:#2a3f5f;transform:translateX(-50%);letter-spacing:0.7px">00:00</div>
<div class="t" style="left:2750.6px;top:1729.1px;font-size:27px;color:#2a3f5f;transform:translateX(-50%);">Sep 26, 2023</div>
<div class="t" style="left:43px;top:1502px;font-size:30px;color:#2a3f5f;transform:translate(-50%,-50%) rotate(-90deg)">AQI</div>
<div class="t" style="left:1588px;top:1776.1px;font-size:30px;color:#2a3f5f;transform:translateX(-50%);">Time</div>
<div class="a" style="left:3125px;top:1335px;width:60px;height:4px;background:#636efa"></div>
<div class="a" style="left:3125px;top:1373px;width:60px;height:4px;background:#de5a3e"></div>
<div class="t" style="left:3196px;top:1323.1px;font-size:27px;color:#2a3f5f;">hrrr</div>
<div class="t" style="left:3196px;top:1361.6px;font-size:27px;color:#2a3f5f;">airlater</div>
<div class="a" style="left:24px;top:1788px;width:3328px;height:72px;background:linear-gradient(#f0f0f0,#ebebeb)"></div>
<div class="t" style="left:1326px;top:1815.4px;font-size:32px;color:#2f7cf6;">Buy Me a Coffee</div>
<div class="t" style="left:1606px;top:1815.4px;font-size:32px;color:#212529;">Contact: airlater (at) gmail.com</div>
<div class="a" style="left:3158px;top:1678px;width:128px;height:128px;border-radius:50%;background:#4a9ff5"></div>
<svg class="a" style="left:3158px;top:1678px" width="128" height="128" viewBox="0 0 128 128"><path d="M52 40 L30 64 L52 88 M76 40 L98 64 L76 88" fill="none" stroke="#fff" stroke-width="9"/></svg>

<div class="a" style="left:0;top:0;width:24px;height:1860px;background:#141414"></div>
<div class="a" style="left:14px;top:166px;width:2px;height:1250px;background:#3a3a3a"></div>
<div class="a" style="left:0;top:342px;width:22px;height:43px;background:#2a2a2e"></div>
<div class="a" style="left:20px;top:54px;width:3px;height:55px;background:#2f5fa8;border-radius:3px 0 0 3px"></div>
<div class="a" style="left:0;top:1836px;width:24px;height:24px;background:#2f5fb0"></div>
<div class="a" style="left:23px;top:0;width:1px;height:1860px;background:#000"></div>
<svg class="a" style="left:0;top:0" width="24" height="200" viewBox="0 0 24 200"><path d="M21,0 L21,28 Q21,31 23,33" fill="none" stroke="#3d3d3d" stroke-width="1.5"/><path d="M10,134 L20,147 L23,144" fill="none" stroke="#8a8a8a" stroke-width="1.5"/></svg>
<div class="a" style="left:21px;top:210px;width:2px;height:16px;background:#6b4fa0"></div>

</body></html>
